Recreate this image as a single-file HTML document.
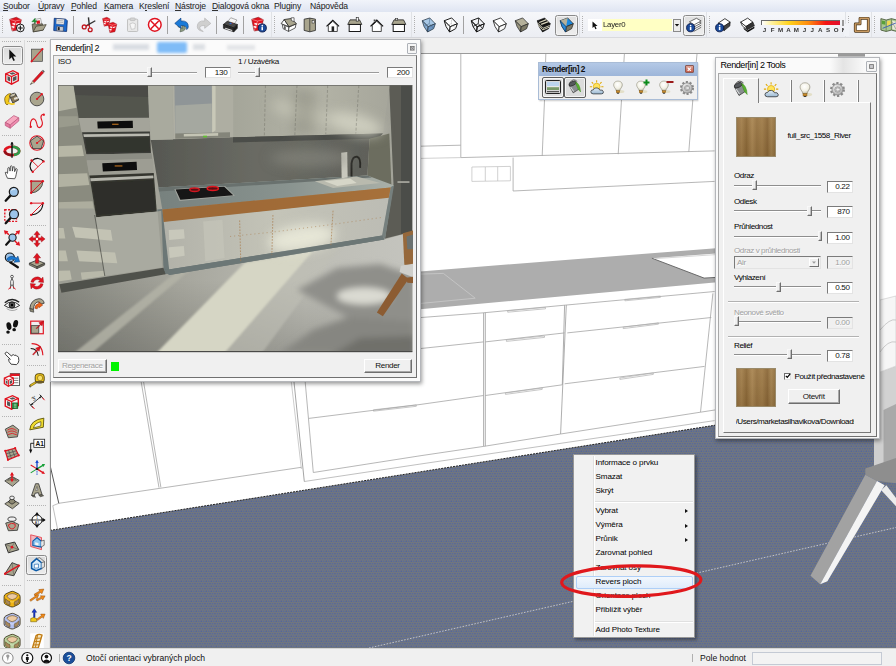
<!DOCTYPE html>
<html lang="cs">
<head>
<meta charset="utf-8">
<title>SketchUp - Render[in] 2</title>
<style>
html,body{margin:0;padding:0}
body{width:896px;height:666px;position:relative;overflow:hidden;background:#f0f0f0;font-family:"Liberation Sans","DejaVu Sans",sans-serif;font-size:8.5px;color:#111;line-height:1}
.abs{position:absolute}
#menubar{position:absolute;left:0;top:0;width:896px;height:12px;background:linear-gradient(#f1f4fa,#dfe5f2)}
#menubar span{position:absolute;top:1.5px;font-size:8.6px;letter-spacing:-0.15px;white-space:nowrap;color:#1a1a1a}
#toolbar{position:absolute;left:0;top:12px;width:896px;height:25px;background:linear-gradient(#f6f7fa,#eceef3);border-bottom:1px solid #d9dade}
#lefttb{position:absolute;left:0;top:38px;width:50px;height:610px;background:#f0f0f0}
#viewport{position:absolute;left:50px;top:53px;width:846px;height:595px;background:#fff;overflow:hidden}
#statusbar{position:absolute;left:0;top:648px;width:896px;height:18px;background:#f0f0f0;border-top:1px solid #d4d4d4;box-sizing:border-box}
svg{position:absolute;left:0;top:0;overflow:visible}
svg text{font-family:"Liberation Sans","DejaVu Sans",sans-serif}
</style>
</head>
<body>
<div id="menubar">
<span style="left:3px">Soubor<i style="left:0;width:5.4px"></i></span>
<span style="left:38px">Úpravy<i style="left:0;width:5.8px"></i></span>
<span style="left:71px">Pohled<i style="left:0;width:5.4px"></i></span>
<span style="left:104px">Kamera<i style="left:0;width:5.4px"></i></span>
<span style="left:139px">Kreslení<i style="left:5.6px;width:2.8px"></i></span>
<span style="left:175px">Nástroje<i style="left:0;width:5.8px"></i></span>
<span style="left:212px">Dialogová okna<i style="left:0;width:5.8px"></i></span>
<span style="left:274px">Pluginy</span>
<span style="left:310px">Nápověda</span>
</div>
<div id="toolbar"></div>
<style>#menubar i{position:absolute;top:8.4px;height:0.8px;background:#333}</style>
<div id="viewport">
<svg width="896" height="666" viewBox="0 0 896 666" style="left:-50px;top:-53px">
<defs>
<pattern id="dots" width="5" height="5" patternUnits="userSpaceOnUse">
<rect width="5" height="5" fill="#70767f"/>
<circle cx="1.25" cy="1.25" r="0.66" fill="#4a5fa6"/>
<circle cx="3.75" cy="1.25" r="0.66" fill="#5468a4"/>
<circle cx="0" cy="3.75" r="0.66" fill="#4a5fa6"/>
<circle cx="2.5" cy="3.75" r="0.66" fill="#5468a4"/>
<circle cx="5" cy="3.75" r="0.66" fill="#4a5fa6"/>
</pattern>
</defs>
<!-- floor -->
<polygon points="50,530.4 896,396.6 896,648 50,648" fill="url(#dots)"/>
<line x1="50" y1="530.4" x2="896" y2="396.6" stroke="#222" stroke-width="1" stroke-dasharray="2 1"/>
<!-- countertop -->
<polygon points="420,271.4 880,235.3 880,267.5 420,309.2" fill="#adadad"/>
<!-- sink -->
<polygon points="651.9,258.2 880,241.5 880,275.3 704.1,278.1" fill="#fff"/>
<path d="M651.9,258.2 L704.1,278.1 L716,277.4" fill="none" stroke="#6a6a6a" stroke-width="1"/>
<path d="M655,258.6 L716,254.6" fill="none" stroke="#c4c4c4" stroke-width="0.7"/>
<path d="M420,274.1 L443.4,273.4 L475.2,298.2 L420,303.5" fill="none" stroke="#c9c9c9" stroke-width="0.8"/>
<g fill="none" stroke="#a4a4a4" stroke-width="0.8">
<!-- upper cabinets -->
<path d="M460.8,54 L460.8,157.6"/>
<path d="M421,146.2 L460.8,145.2"/>
<path d="M421,158.4 L460.8,157.6" stroke="#c4c4c4"/>
<path d="M460.8,157.6 L714.6,150.9" />
<path d="M545.8,54 L544.5,100 L542.2,155.9"/>
<path d="M624.4,54 L621.5,100 L618.2,154.2"/>
<path d="M697,54 L692.8,100 L688.8,151.9"/>
<path d="M513.1,157.6 L513.1,191 L714.6,181.4"/>
<!-- sockets -->
<path d="M471.9,167 L510.4,166.4 L510.4,180.8 L471.9,181.4Z M485.3,167 L485.3,181 M497.7,166.8 L497.7,181" stroke="#bdbdbd" stroke-width="0.7"/>
<!-- lower cabinets -->
<path d="M420,317.6 L483.6,312.8 L565.6,305.1 L714.6,291.5"/>
<path d="M483.6,312.8 L483.6,446.4 M485.3,312.6 L485.3,446.2" stroke="#9a9a9a"/>
<path d="M566.3,305.1 L560.6,434 M564.6,305.2 L562.3,384.8" stroke="#9a9a9a"/>
<path d="M712.9,293.4 L700.5,412.2"/>
<path d="M420,348.6 L483.6,341.9"/>
<path d="M420,404.5 L483.6,395.5"/>
<path d="M485.3,341.9 L564.6,332.9"/>
<path d="M485.3,395.5 L562.3,384.8"/>
<path d="M567.3,332.9 L711.3,317.5"/>
<path d="M564.6,383.8 L704.6,366.4"/>
<!-- handles -->
<g stroke="#b0b0b0" stroke-width="0.7">
<path d="M507.7,310.8 L545.5,307.4 L545.5,308.8 L507.7,312.2Z"/>
<path d="M506.4,340 L544.5,336 L544.5,337.4 L506.4,341.4Z"/>
<path d="M505.4,393 L542.2,388 L542.2,389.4 L505.4,394.4Z"/>
<path d="M624.9,299.4 L660.4,296 L660.4,297.4 L624.9,300.8Z"/>
<path d="M623.2,327.2 L658.4,322.8 L658.4,324.2 L623.2,328.6Z"/>
<path d="M619.9,378 L653.3,373 L653.3,374.4 L619.9,379.4Z"/>
<path d="M373.5,409.8 L416.3,404.9 L416.3,406.3 L373.5,411.2Z"/>
</g>
<!-- cabinet bottom + plinth -->
<path d="M313.3,472.5 L420,455.8 L483.6,446.4 L560.6,434 L700.5,412.2 L716,409.8"/>
<path d="M304.3,481.5 L420,464.1 L714.6,420.6" stroke="#b0b0b0"/>
<!-- left below dialog -->
<path d="M291.3,382 L301.4,469" stroke="#c0c0c0"/>
<path d="M294,382 L304.3,481.5" stroke="#8e8e8e"/>
<path d="M305.2,382 L313.3,472.5"/>
<path d="M308.8,418.4 L420,404.5"/>
<path d="M141.2,382 L159,487.7 M143.6,382 L160.9,487.4"/>
<path d="M58.8,503.3 L208,481.2 L301.4,467.3"/>
<path d="M52.8,505.7 L58.8,503.3 M52.8,505.7 L57.6,529.3" stroke="#b0b0b0"/>
<path d="M50,465 L58.8,503.3" stroke="#555" stroke-width="1"/>
</g>
<path d="M369,648 L896,527.5" stroke="#c9cbd0" stroke-width="0.9" stroke-dasharray="1.6 1.4" fill="none"/>
<!-- chair at right -->
<g>
<polygon points="880,372 896,366 896,470 880,466" fill="#d2d2d2"/>
<polygon points="880,300 896,296 896,366 880,372" fill="#f6f6f6" stroke="#c8c8c8" stroke-width="0.6"/>
<path d="M880,330 Q890,318 896,320 M880,352 Q888,340 896,342" fill="none" stroke="#c0c0c0" stroke-width="0.8"/>
<polygon points="874,438 883.5,438 883.5,465 874,468" fill="#cfcfcf"/>
<polygon points="883.5,410 896,404 896,462 883.5,466" fill="#a9a9a9"/>
<polygon points="865.3,468.4 896,457.9 896,483.2 877,480.9 865.3,474.7" fill="#8e8e8e"/>
<polygon points="865.3,474.7 877,481 820.2,584.2 810.5,575.8" fill="#a2a2a2"/>
<polygon points="877,481 884.6,485.3 827.4,581.3 820.2,584.2" fill="#f4f4f4"/>
<polygon points="881.3,490.3 886.3,485.3 896,497.9 896,506.3" fill="#ececec"/>
</g>
<rect x="838" y="54" width="27" height="2.6" fill="#9c9c9c"/>
<line x1="50.5" y1="54" x2="50.5" y2="648" stroke="#8e8e8e" stroke-width="1"/>
<line x1="50" y1="53.5" x2="896" y2="53.5" stroke="#9a9a9a" stroke-width="1"/>
</svg>
</div>
<!-- Render[in] 2 dialog -->
<div class="abs" style="left:49.5px;top:38.5px;width:371.4px;height:343px;background:#fbfbfb;border:1px solid #b4b6ba;box-sizing:border-box;box-shadow:1px 2px 4px rgba(0,0,0,.4)">
<div class="abs" style="left:106px;top:2px;width:30px;height:11px;background:#7fbcf7;filter:blur(1.5px);border-radius:2px"></div>
<div class="abs" style="left:62px;top:4px;width:36px;height:6px;background:#d9dde2;filter:blur(1.5px)"></div>
<div class="abs" style="left:142px;top:4px;width:12px;height:6px;background:#dcdfe3;filter:blur(1.5px)"></div>
<div class="abs" style="left:176px;top:5px;width:28px;height:5px;background:#e2e4e7;filter:blur(1.5px)"></div>
<span class="abs" style="left:5px;top:4px;font-size:9px;letter-spacing:-0.45px;white-space:nowrap;color:#000">Render[in] 2</span>
<div class="abs" style="left:356.3px;top:3.5px;width:10.6px;height:10.6px;border:1px solid #aeb2b8;box-sizing:border-box;background:#f6f6f6;border-radius:1px"><svg width="8.6" height="8.6" viewBox="0 0 9 9"><rect x="2.6" y="2.6" width="3.8" height="3.8" fill="#c8c8cc" stroke="#777" stroke-width="0.9"/><path d="M2.6,2.6 L6.4,6.4 M6.4,2.6 L2.6,6.4" stroke="#777" stroke-width="0.7"/></svg></div>
<div class="abs" style="left:2.3px;top:15px;width:364.6px;height:323.6px;background:#f0f0f0;border:1px solid #a8a8a8;border-right-color:#707070;border-bottom-color:#707070;box-sizing:border-box"></div>
</div>
<div class="abs" id="rdlg" style="left:0;top:0;width:0;height:0">
<span class="abs" style="left:58px;top:58px;font-size:8.1px;letter-spacing:-0.38px">ISO</span>
<span class="abs" style="left:238px;top:58px;font-size:8.1px;letter-spacing:-0.38px;white-space:nowrap">1 / Uzávěrka</span>
<!-- sliders -->
<div class="abs" style="left:58px;top:71.5px;width:139px;height:1px;background:#9b9b9b;border-bottom:1px solid #fff"></div>
<div class="abs" style="left:148px;top:67px;width:4.4px;height:10px;margin-left:-0.8px;background:#f0f0f0;border:1px solid #f8f8f8;border-right-color:#6e6e6e;border-bottom-color:#6e6e6e;box-sizing:border-box;box-shadow:inset -0.6px -0.6px 0 #a0a0a0"></div>
<div class="abs" style="left:238px;top:71.5px;width:141px;height:1px;background:#9b9b9b;border-bottom:1px solid #fff"></div>
<div class="abs" style="left:256px;top:67px;width:4.4px;height:10px;margin-left:-0.8px;background:#f0f0f0;border:1px solid #f8f8f8;border-right-color:#6e6e6e;border-bottom-color:#6e6e6e;box-sizing:border-box;box-shadow:inset -0.6px -0.6px 0 #a0a0a0"></div>
<div class="abs vbox" style="left:204.5px;top:67px;width:26px;height:11px"><span>130</span></div>
<div class="abs vbox" style="left:387px;top:67px;width:25.5px;height:11px"><span>200</span></div>
<!-- buttons -->
<div class="abs btn" style="left:58px;top:359px;width:48.5px;height:13.5px;color:#a0a0a0;text-shadow:0.5px 0.5px 0 #fff"><span>Regenerace</span></div>
<div class="abs" style="left:110.5px;top:362px;width:8.5px;height:8.7px;background:#00f400"></div>
<div class="abs btn" style="left:363.5px;top:359px;width:48px;height:13.5px"><span>Render</span></div>
</div>
<style>
.vbox{background:#fff;border:1px solid #7a7a7a;border-right-color:#e3e3e3;border-bottom-color:#e3e3e3;box-sizing:border-box;font-size:7.6px;text-align:right}
.vbox span{position:absolute;right:2.2px;top:1.4px;letter-spacing:-0.35px;font-size:8.1px}
.btn{background:#f0f0f0;border:1px solid #fff;border-right-color:#6e6e6e;border-bottom-color:#6e6e6e;box-sizing:border-box;font-size:7.6px;text-align:center;box-shadow:inset -1px -1px 0 #a8a8a8}
.btn span{position:absolute;left:0;right:0;top:2.3px;letter-spacing:-0.35px;font-size:8.1px}
</style>
<!-- rendered kitchen image -->
<svg class="abs" width="896" height="666" viewBox="0 0 896 666" style="left:0;top:0;pointer-events:none">
<defs>
<clipPath id="imgclip"><rect x="58" y="85.3" width="354.3" height="266.5"/></clipPath>
<filter id="b1" x="-5%" y="-5%" width="110%" height="110%"><feGaussianBlur stdDeviation="0.55"/></filter>
<filter id="b2" x="-20%" y="-20%" width="140%" height="140%"><feGaussianBlur stdDeviation="1.3"/></filter>
<filter id="b3" x="-20%" y="-20%" width="140%" height="140%"><feGaussianBlur stdDeviation="3"/></filter>
<filter id="b6" x="-30%" y="-30%" width="160%" height="160%"><feGaussianBlur stdDeviation="6"/></filter>
<linearGradient id="flr" gradientUnits="userSpaceOnUse" x1="58" y1="0" x2="412" y2="0"><stop offset="0" stop-color="#878880"/><stop offset="0.35" stop-color="#a6a69d"/><stop offset="0.7" stop-color="#bdbdb5"/><stop offset="1" stop-color="#c4c4be"/></linearGradient>
<linearGradient id="flrv" gradientUnits="userSpaceOnUse" x1="0" y1="280" x2="0" y2="352"><stop offset="0" stop-color="#000" stop-opacity="0"/><stop offset="1" stop-color="#000" stop-opacity="0.17"/></linearGradient>
<linearGradient id="bsp" gradientUnits="userSpaceOnUse" x1="150" y1="0" x2="390" y2="0"><stop offset="0" stop-color="#565751"/><stop offset="0.45" stop-color="#6a6b64"/><stop offset="1" stop-color="#5e5f58"/></linearGradient>
<linearGradient id="upc" gradientUnits="userSpaceOnUse" x1="230" y1="0" x2="390" y2="0"><stop offset="0" stop-color="#a4a599"/><stop offset="0.55" stop-color="#b3b3a6"/><stop offset="1" stop-color="#a6a69b"/></linearGradient>
<linearGradient id="ctop" gradientUnits="userSpaceOnUse" x1="158" y1="0" x2="394" y2="0"><stop offset="0" stop-color="#77817e"/><stop offset="0.55" stop-color="#89938f"/><stop offset="1" stop-color="#aab0a8"/></linearGradient>
<linearGradient id="woodk" gradientUnits="userSpaceOnUse" x1="162" y1="0" x2="390" y2="0"><stop offset="0" stop-color="#95673a"/><stop offset="0.6" stop-color="#a06e3a"/><stop offset="1" stop-color="#ad7a42"/></linearGradient>
<linearGradient id="cabf" gradientUnits="userSpaceOnUse" x1="165" y1="0" x2="390" y2="0"><stop offset="0" stop-color="#b2b2a9"/><stop offset="0.5" stop-color="#c4c4b8"/><stop offset="1" stop-color="#bcbcb4"/></linearGradient>
</defs>
<g clip-path="url(#imgclip)">
<rect x="58" y="85" width="355" height="267" fill="#a3a399"/>
<g filter="url(#b1)">
<!-- floor (global) -->
<polygon points="58,284 164,268 170,275 384,239.5 413,231.5 413,353 58,353" fill="url(#flr)"/>
<polygon points="58,284 413,231.5 413,353 58,353" fill="url(#flrv)"/>
</g>
<!-- floor light & shadows (blurred) -->
<g filter="url(#b2)">
<polygon points="245,262.4 313,251.1 224.7,353 156.4,353" fill="#d6d6c5"/>
<polygon points="176.5,272 190,270 92,353 74,353" fill="#b4b4a8" opacity="0.8"/>
<polygon points="313,251.1 340,247 262,353 224.7,353" fill="#c0c0b6" opacity="0.6"/>
</g>
<g filter="url(#b3)">
<polygon points="297,290 337,268 380,264 415,276 415,326 349,318" fill="#8f8f8a"/>
<polygon points="279,354 313,330 349,317 415,322 415,354" fill="#868681"/>
<polygon points="330,356 360,338 415,336 415,356" fill="#6f6f6a"/>
<ellipse cx="364" cy="296" rx="27" ry="8.5" fill="#dadad2"/>
</g>
<g filter="url(#b1)">
<!-- right wall -->
<polygon points="389,82 413,82 413,231.5 385,238.4 393.5,184" fill="#5b5c55"/>
<polygon points="401,82 413,82 413,231 401,234" fill="#4c4d48"/>
<!-- upper cabinets right part -->
<polygon points="233,82 390,82 383,133.5 233,137.3" fill="url(#upc)"/>
<!-- backsplash -->
<polygon points="150.8,140 233,137.3 383,133.5 369.6,139 367.4,175.6 158.5,187.6" fill="url(#bsp)"/>
<polygon points="233,137.3 383,133.5 378,138.5 233,142.5" fill="#4c4d48"/>
<polygon points="369.6,138.8 389.3,133.5 391.4,185.5 367.4,176.5" fill="#6c6d5f"/>
<!-- countertop -->
<polygon points="158.5,187.6 367.4,175.6 394.2,185.5 390.6,187.8 162.3,209.6" fill="url(#ctop)"/>
<polygon points="158.5,187.6 367.4,175.6 372,177.5 159,191.5" fill="#69716e"/>
<!-- wood -->
<polygon points="162.3,209.5 390.6,187.6 388.8,197.8 163.6,222" fill="url(#woodk)"/>
<!-- cabinet fronts -->
<polygon points="163.6,222 388.8,197.8 382.6,235.7 164.3,270.6" fill="url(#cabf)"/>
<!-- frames -->
<polygon points="157.2,209.5 162.3,209.1 169.6,273.4 164,274.2" fill="#6c7776"/>
<polygon points="164,270.2 382.3,235.5 384.3,239.5 169.2,275" fill="#6c7776"/>
<polygon points="390.8,187 394,185.3 385,239.3 382,235.8" fill="#76807e"/>
<!-- ===== top-left quadrant details ===== -->
<g transform="translate(55,82) scale(0.21469)">
<!-- left wall -->
<polygon points="0,0 90,0 200,680 0,680" fill="#8a8b7f"/>
<polygon points="0,0 85,0 100,120 0,140" fill="#b4b4a4"/>
<polygon points="0,160 105,160 112,200 0,215" fill="#9a9b8d"/>
<polygon points="0,300 125,295 135,345 0,350" fill="#b7b7a6"/>
<polygon points="0,430 150,425 160,480 0,490" fill="#b2b2a2"/>
<polygon points="0,560 175,555 185,610 0,620" fill="#adad9e"/>
<!-- dark above oven -->
<polygon points="85,0 432,0 438,168 110,168" fill="#53544e"/>
<polygon points="85,0 432,0 434,70 95,60" fill="#4b4c46"/>
<!-- oven 1 panel -->
<polygon points="110,168 440,166 442,230 124,234" fill="#a4a49a"/>
<polygon points="197,184 362,181 363,214 199,217" fill="#0d0d0c"/>
<rect x="266" y="194" width="30" height="6" fill="#a8661c"/>
<!-- oven 1 door -->
<polygon points="126,234 442,230 447,332 146,338" fill="#3b3c37"/>
<polygon points="132,243 440,240 440,252 134,256" fill="#b9b9b0"/>
<polygon points="140,262 438,258 444,325 150,330" fill="#33342f"/>
<!-- gap -->
<polygon points="142,338 450,332 453,360 147,366" fill="#8c8d84"/>
<!-- oven 2 panel -->
<polygon points="147,366 455,358 460,424 160,436" fill="#9d9d93"/>
<polygon points="220,378 380,372 382,410 223,417" fill="#0d0d0c"/>
<rect x="278" y="388" width="36" height="6" fill="#a8661c"/>
<!-- oven 2 door -->
<polygon points="160,436 460,424 474,604 192,630" fill="#34352f"/>
<polygon points="164,448 458,436 459,448 166,462" fill="#b4b4ab"/>
<polygon points="172,470 456,456 468,596 196,620" fill="#2d2e29"/>
<!-- upper narrow cab -->
<polygon points="432,0 548,0 550,268 446,270" fill="#a9aa9e"/>
<!-- glass cab -->
<polygon points="548,0 830,0 830,256 552,266" fill="#aeaea2"/>
<polygon points="556,8 730,8 732,236 560,240" fill="#8f9597"/>
<polygon points="560,110 730,100 732,236 560,240" fill="#a5a8a0"/>
<polygon points="732,8 748,20 748,225 732,236" fill="#c8c8b8"/>
<polygon points="560,240 815,234 815,258 560,264" fill="#84857a"/>
<polygon points="600,242 760,238 760,250 600,254" fill="#c4c4b4"/>
<rect x="690" y="250" width="18" height="8" fill="#5fc030"/>
<!-- cooktop -->
<polygon points="556,498 792,484 838,530 580,554" fill="#a0a49e"/>
<polygon points="562,501 788,488 830,528 584,549" fill="#141414"/>
<ellipse cx="650" cy="502" rx="22" ry="8" fill="#5a1014" stroke="#d01820" stroke-width="7"/>
<ellipse cx="735" cy="496" rx="26" ry="9" fill="#5a1014" stroke="#e01820" stroke-width="7"/>
</g>
<!-- ===== sink etc ===== -->
<g transform="translate(230,82) scale(0.21469)">
<polygon points="395,462 590,440 700,470 480,494" fill="#b9baae"/>
<polygon points="440,462 560,450 590,470 500,484" fill="#d6d6c8"/>
<polygon points="518,330 546,326 548,445 520,448" fill="#c9c9be"/>
<path d="M566,440 L566,380 Q570,345 592,348 Q610,352 606,400" fill="none" stroke="#2c2c28" stroke-width="9"/>
<rect x="780" y="462" width="56" height="8" fill="#a8a8a0"/>
</g>
<!-- ===== tall cabinet lower ===== -->
<g transform="translate(55,215) scale(0.21469)">
<polygon points="0,-30 180,-30 192,10 476,-16 495,-20 505,246 20,322 0,330" fill="#9c9d93"/>
<polygon points="186,12 478,-15 500,244 232,284" fill="#a9aaa0"/>
<polygon points="80,55 260,70 268,120 95,105" fill="#c3c3b4"/>
<polygon points="100,165 280,175 290,225 112,215" fill="#c0c0b1"/>
<polygon points="15,60 40,60 48,110 15,110" fill="#bcbcac"/>
<polygon points="15,165 50,165 60,215 15,215" fill="#bcbcac"/>
<polygon points="15,260 70,258 78,300 15,310" fill="#bcbcac"/>
<polygon points="120,268 230,260 232,284 125,300" fill="#b8b8a9"/>
<path d="M185,0 L232,284" stroke="#3a3b36" stroke-width="3" fill="none"/>
<!-- plinth -->
<polygon points="20,322 505,246 515,276 30,362" fill="#50514b"/>
<polygon points="690,30 780,22 790,200 700,215" fill="#c6c6ba" opacity="0.6"/>
<polygon points="530,70 600,66 604,110 532,116" fill="#c8c8bb"/>
<polygon points="530,150 600,144 604,190 534,200" fill="#c8c8bb"/>
</g>
</g>
<g filter="url(#b6)">
<ellipse cx="355" cy="124" rx="28" ry="10" fill="#d2d2c2" opacity="0.9" transform="rotate(14 355 124)"/>
<ellipse cx="300" cy="112" rx="30" ry="8" fill="#c6c6b6" opacity="0.8" transform="rotate(16 300 112)"/>
<rect x="292" y="90" width="24" height="44" fill="#84857a" opacity="0.45"/>
<ellipse cx="302" cy="238" rx="34" ry="13" fill="#e8e8d8" opacity="0.95" transform="rotate(-9 302 238)"/>
<ellipse cx="310" cy="158" rx="40" ry="9" fill="#8a8b82" opacity="0.6"/>
</g>
<g filter="url(#b1)">
<g transform="translate(230,82) scale(0.21469)" fill="none" stroke="#5e5f55" stroke-width="3" stroke-dasharray="14 8" opacity="0.55"><path d="M165,15 L160,252 M312,15 L302,247 M455,15 L446,243 M600,15 L586,240"/></g>
<!-- redraw frames over glow -->
<polygon points="164,270.2 382.3,235.5 384.3,239.5 169.2,275" fill="#6c7776"/>
<polygon points="162.3,209.5 390.6,187.6 388.8,197.8 163.6,222" fill="#a26a34" opacity="0.55"/>
<g transform="translate(230,215) scale(0.21469)">
<!-- chair -->
<polygon points="805,85 860,70 860,235 812,232" fill="#96683a"/>
<polygon points="822,100 860,88 860,160 826,160" fill="#6a716f"/>
<polygon points="796,236 860,226 860,292 790,266" fill="#cfcfcb"/>
<polygon points="800,272 832,298 712,472 684,454" fill="#8c5c32"/>
<polygon points="820,292 860,286 860,318 826,316" fill="#8c5c32"/>
<path d="M200,0 L195,185 M480,-20 L470,140 M45,25 L50,215" stroke="#a87848" stroke-width="3" stroke-dasharray="8 6" fill="none"/>
<path d="M0,100 L195,80 L470,45 L716,10" stroke="#a87848" stroke-width="2.5" stroke-dasharray="5 14" fill="none"/>
</g>
</g>
</g>
<rect x="58" y="351" width="354.3" height="1.2" fill="#4a4a48"/>
<rect x="58" y="85.2" width="354.3" height="0.8" fill="#5a5a56" opacity="0.8"/>
<rect x="58" y="85.2" width="0.8" height="266" fill="#6a6a66" opacity="0.7"/>
</svg>
<!-- icon symbols -->
<svg width="0" height="0" style="position:absolute">
<defs>
<radialGradient id="bulbg" cx="0.45" cy="0.35" r="0.6"><stop offset="0" stop-color="#ffffff"/><stop offset="0.7" stop-color="#f2f0e4"/><stop offset="1" stop-color="#c9c6b4"/></radialGradient>
<radialGradient id="gearg" cx="0.4" cy="0.35" r="0.7"><stop offset="0" stop-color="#f4f4f4"/><stop offset="1" stop-color="#a9a9a9"/></radialGradient>
<linearGradient id="cloudg" x1="0" y1="0" x2="0" y2="1"><stop offset="0" stop-color="#e4eef6"/><stop offset="1" stop-color="#9ab8d2"/></linearGradient>
<linearGradient id="woodg" x1="0" y1="0" x2="1" y2="0"><stop offset="0" stop-color="#8a5f2c"/><stop offset="0.12" stop-color="#9c7038"/><stop offset="0.25" stop-color="#86592a"/><stop offset="0.4" stop-color="#a27840"/><stop offset="0.52" stop-color="#8e6430"/><stop offset="0.66" stop-color="#9a6e36"/><stop offset="0.8" stop-color="#84592a"/><stop offset="0.9" stop-color="#9f743c"/><stop offset="1" stop-color="#8b602e"/></linearGradient>
<symbol id="i-bucket" viewBox="0 0 20 20">
<path d="M3.5,8 L11,4.5 L15,12 L8,16.5 Z" fill="#8a8d90" stroke="#3a3a3a" stroke-width="0.8"/>
<ellipse cx="7.2" cy="6.2" rx="4.2" ry="2.2" transform="rotate(-25 7.2 6.2)" fill="#55585c" stroke="#2c2c2c" stroke-width="0.8"/>
<path d="M4,5.5 Q8,-0.5 12.5,4" fill="none" stroke="#444" stroke-width="0.9"/>
<path d="M10.5,4.5 Q15.5,6 16.2,15.5 Q13,13 12,9 Z" fill="#58b030" stroke="#3c8a1c" stroke-width="0.5"/>
<path d="M5,10 L8.5,15" stroke="#d8dadc" stroke-width="1.2"/>
</symbol>
<symbol id="i-sun" viewBox="0 0 20 20">
<g stroke="#e0a800" stroke-width="1.2"><path d="M9,1.5 L9,4 M3.2,3.6 L5,5.4 M14.8,3.6 L13,5.4 M1,9 L3.5,9 M17,9 L14.5,9"/></g>
<circle cx="9" cy="9" r="4" fill="#ffe45c" stroke="#e0a800" stroke-width="0.8"/>
<path d="M5,17.5 Q2,17.5 2.2,14.8 Q2.5,12.5 5,12.8 Q6,9.8 9.5,10.5 Q12,10.8 12.6,13 Q16.5,12.2 17,15.2 Q17.2,17.5 14.5,17.5 Z" fill="url(#cloudg)" stroke="#303438" stroke-width="0.9"/>
</symbol>
<symbol id="i-bulb" viewBox="0 0 20 20">
<ellipse cx="13" cy="15" rx="5" ry="2" fill="#d9d2a8" opacity="0.55"/>
<path d="M10,2 C5.5,2 4,5.5 4.8,8.2 C5.5,10.5 7.3,11.5 7.6,14 L12.4,14 C12.7,11.5 14.5,10.5 15.2,8.2 C16,5.5 14.5,2 10,2 Z" fill="url(#bulbg)" stroke="#8a8878" stroke-width="0.7"/>
<rect x="7.8" y="14" width="4.4" height="2.6" fill="#c88a28" stroke="#7a5010" stroke-width="0.5"/>
<rect x="8.6" y="16.6" width="2.8" height="1.2" fill="#3a3a3a"/>
</symbol>
<symbol id="i-gear" viewBox="0 0 20 20">
<circle cx="10" cy="10" r="7.4" fill="none" stroke="#8a8a8a" stroke-width="2.8" stroke-dasharray="2.6 2.05"/>
<circle cx="10" cy="10" r="6.5" fill="url(#gearg)" stroke="#7c7c7c" stroke-width="0.8"/>
<circle cx="10" cy="10" r="3.1" fill="#ededed" stroke="#808080" stroke-width="0.9"/>
<path d="M11.4,8.8 A1.8,1.8 0 1 0 11.4,11.2" fill="none" stroke="#8a8a8a" stroke-width="0.8"/>
</symbol>
</defs>
</svg>
<!-- Render[in] 2 Tools panel -->
<div class="abs" style="left:715px;top:57.4px;width:165.3px;height:382px;background:linear-gradient(90deg,#fafafa 0,#fafafa 70%,#e4e4e4 78%,#fafafa 92%);border:1px solid #b4b6ba;box-sizing:border-box;box-shadow:1px 2px 4px rgba(0,0,0,.4)">
<div class="abs" style="left:0;top:16px;width:163.3px;height:364px;background:#fafafa"></div>
<span class="abs" style="left:4.5px;top:3px;font-size:9px;letter-spacing:-0.42px;white-space:nowrap;color:#000">Render[in] 2 Tools</span>
<div class="abs" style="left:149.6px;top:2.6px;width:11px;height:11px;border:1px solid #aeb2b8;box-sizing:border-box;background:#f6f6f6;border-radius:1px"><svg width="9" height="9" viewBox="0 0 9 9"><rect x="2.6" y="2.6" width="3.8" height="3.8" fill="#c8c8cc" stroke="#777" stroke-width="0.9"/></svg></div>
<div class="abs" style="left:2.4px;top:14.6px;width:158.7px;height:363.6px;background:#f0f0f0;border:1px solid #a8a8a8;border-right-color:#707070;border-bottom-color:#707070;box-sizing:border-box"></div>
</div>
<div class="abs" style="left:0;top:0;width:0;height:0" id="tools">
<!-- tab pane border -->
<div class="abs" style="left:723px;top:102px;width:147.9px;height:330.8px;border:1px solid #fff;border-right:1.2px solid #787878;border-bottom:1.2px solid #787878;box-sizing:border-box"></div>
<!-- selected tab -->
<div class="abs" style="left:723px;top:78px;width:36px;height:25px;background:#f0f0f0;border-left:1px solid #fff;border-top:1px solid #fff;border-right:1px solid #7e7e7e;box-sizing:border-box"></div>
<div class="abs" style="left:790.3px;top:80px;width:1px;height:22px;background:#7e7e7e;border-left:1px solid #fff"></div>
<div class="abs" style="left:823.3px;top:80px;width:1px;height:22px;background:#7e7e7e;border-left:1px solid #fff"></div>
<div class="abs" style="left:856.5px;top:80px;width:1px;height:22px;background:#7e7e7e;border-left:1px solid #fff"></div>
<svg class="abs" style="left:731px;top:79px" width="20" height="20"><use href="#i-bucket"/></svg>
<svg class="abs" style="left:763px;top:80.5px" width="18" height="18"><use href="#i-sun"/></svg>
<svg class="abs" style="left:795.5px;top:80.5px" width="18" height="18"><use href="#i-bulb"/></svg>
<svg class="abs" style="left:829px;top:81px" width="17" height="17"><use href="#i-gear"/></svg>
<!-- swatch 1 -->
<div class="abs swatch" style="left:735.5px;top:116.5px;width:40px;height:40px"></div>
<span class="abs t" style="left:787.5px;top:132px">full_src_1558_River</span>
<!-- Odraz -->
<span class="abs t" style="left:734px;top:172px">Odraz</span>
<div class="abs trk" style="left:734px;top:184.5px;width:87px"></div><div class="abs thm" style="left:753.5px;top:180px"></div>
<div class="abs vbox" style="left:826.8px;top:180.5px;width:26px;height:12px"><span>0.22</span></div>
<!-- Odlesk -->
<span class="abs t" style="left:734px;top:197.5px">Odlesk</span>
<div class="abs trk" style="left:734px;top:210px;width:87px"></div><div class="abs thm" style="left:808.5px;top:205.5px"></div>
<div class="abs vbox" style="left:826.8px;top:206px;width:26px;height:12px"><span>870</span></div>
<!-- Pruhlednost -->
<span class="abs t" style="left:734px;top:223px">Průhlednost</span>
<div class="abs trk" style="left:734px;top:235.5px;width:87px"></div><div class="abs thm" style="left:819px;top:231px"></div>
<div class="abs vbox" style="left:826.8px;top:231.5px;width:26px;height:12px"><span>1.00</span></div>
<!-- Odraz v pruhlednosti -->
<span class="abs t dis" style="left:734px;top:247.2px">Odraz v průhlednosti</span>
<div class="abs" style="left:734px;top:256.3px;width:86.5px;height:12.6px;background:#f0f0f0;border:1.3px solid #7a7a7a;border-right-color:#e3e3e3;border-bottom-color:#e3e3e3;box-sizing:border-box"><span class="abs dis" style="left:2px;top:1.6px;font-size:8.1px;letter-spacing:-0.4px">Air</span><div class="abs" style="right:0.5px;top:0.5px;width:10px;height:9px;background:#f0f0f0;border:1px solid #fff;border-right-color:#707070;border-bottom-color:#707070;box-sizing:border-box"><svg width="8" height="7" viewBox="0 0 8 7"><path d="M2,2.5 L6,2.5 L4,4.8 Z" fill="#9a9a9a"/></svg></div></div>
<div class="abs vbox dis" style="left:826.8px;top:256.3px;width:26px;height:12.6px;background:#f0f0f0"><span>1.00</span></div>
<!-- Vyhlazeni -->
<span class="abs t" style="left:734px;top:274px">Vyhlazení</span>
<div class="abs trk" style="left:734px;top:286px;width:87px"></div><div class="abs thm" style="left:777.5px;top:281.5px"></div>
<div class="abs vbox" style="left:826.8px;top:282px;width:26px;height:12px"><span>0.50</span></div>
<div class="abs sep" style="left:728px;top:301px;width:131px"></div>
<!-- Neonove svetlo -->
<span class="abs t dis" style="left:734px;top:308.5px">Neonové světlo</span>
<div class="abs trk" style="left:734px;top:320.5px;width:87px"></div><div class="abs thm" style="left:735.5px;top:316px"></div>
<div class="abs vbox dis" style="left:826.8px;top:317px;width:26px;height:12px;background:#f0f0f0"><span>0.00</span></div>
<div class="abs sep" style="left:728px;top:335.5px;width:131px"></div>
<!-- Relief -->
<span class="abs t" style="left:734px;top:341.5px">Reliéf</span>
<div class="abs trk" style="left:734px;top:353.5px;width:87px"></div><div class="abs thm" style="left:788.5px;top:349px"></div>
<div class="abs vbox" style="left:826.8px;top:349.5px;width:26px;height:12px"><span>0.78</span></div>
<!-- swatch 2 -->
<div class="abs swatch" style="left:735.5px;top:367.5px;width:40px;height:39.5px"></div>
<div class="abs" style="left:783.5px;top:372.5px;width:7.5px;height:7.5px;background:#fff;border:1px solid #6e6e6e;border-right-color:#e0e0e0;border-bottom-color:#e0e0e0;box-sizing:border-box"><svg width="6" height="6" viewBox="0 0 6 6" style="left:0;top:-0.3px"><path d="M0.8,2.8 L2.3,4.4 L5.2,0.9" fill="none" stroke="#000" stroke-width="1.2"/></svg></div>
<span class="abs t" style="left:794.5px;top:372.5px">Použít přednastavené</span>
<div class="abs btn" style="left:787.6px;top:389px;width:52.3px;height:14.8px"><span style="top:3.2px">Otevřít</span></div>
<div class="abs" style="left:735.5px;top:417.5px;width:118.5px;height:9px;overflow:hidden;white-space:nowrap"><span class="t" style="position:absolute;left:0;top:0">/Users/marketasilhavikova/Downloads/</span></div>
</div>
<style>
#tools .t,.t{font-size:8.1px;letter-spacing:-0.44px;white-space:nowrap;color:#000}
.dis,#tools .dis{color:#a0a0a0 !important;text-shadow:0.5px 0.5px 0 #fff}
.trk{height:1.2px;background:#8e8e8e;border-bottom:1px solid #fff}
.thm{width:4.4px;height:10px;margin-left:-1.2px;background:#f0f0f0;border:1px solid #f8f8f8;border-right-color:#6e6e6e;border-bottom-color:#6e6e6e;box-sizing:border-box;box-shadow:inset -0.6px -0.6px 0 #a0a0a0}
.sep{height:1px;background:#b2b2b2;border-bottom:1px solid #fff}
.swatch{background:linear-gradient(180deg,rgba(255,255,255,.06),rgba(0,0,0,.08)),linear-gradient(90deg,#947040 0,#a27e4a 12%,#8c6836 25%,#aa8652 40%,#967240 52%,#a07c48 66%,#8a6636 80%,#a4824e 90%,#92703e 100%);border:0.6px solid #9a8a6a;box-sizing:border-box}
</style>
<!-- floating Render[in] 2 toolbar -->
<div class="abs" style="left:538px;top:61.5px;width:160px;height:38.5px;background:#f0f0f0;border:1px solid #a9bcd6;box-sizing:border-box;box-shadow:0.5px 1px 1.5px rgba(0,0,0,.25)">
<div class="abs" style="left:0;top:0;width:158px;height:13px;background:linear-gradient(#b4c9e6,#9db5d9)"></div>
<span class="abs" style="left:3px;top:2.5px;font-size:8.3px;font-weight:bold;letter-spacing:-0.45px;white-space:nowrap;color:#111">Render[in] 2</span>
<div class="abs" style="left:146px;top:2px;width:8.5px;height:8.5px;background:linear-gradient(#e0a498,#c45a48);border:1px solid #8a5a54;box-sizing:border-box;border-radius:1px"><svg width="6.5" height="6.5" viewBox="0 0 7 7"><path d="M1.8,1.8 L5.2,5.2 M5.2,1.8 L1.8,5.2" stroke="#fff" stroke-width="1.3"/></svg></div>
<div class="abs" style="left:2.5px;top:14.5px;width:22px;height:20.5px;border:1px solid #5e5e5e;border-radius:2px;background:#e2e2e2;box-sizing:border-box;box-shadow:inset 0 0 0 1px #f8f8f8"></div>
<div class="abs" style="left:25px;top:14.5px;width:22px;height:20.5px;border:1px solid #5e5e5e;border-radius:2px;background:#dcdcdc;box-sizing:border-box;box-shadow:inset 0 0 0 1px #f4f4f4"></div>
<svg class="abs" style="left:5.5px;top:17.5px" width="16" height="14" viewBox="0 0 16 14"><rect x="0.5" y="0.5" width="15" height="13" rx="1" fill="#d8d8d8" stroke="#222" stroke-width="1"/><rect x="2" y="2" width="12" height="8" fill="#bcd4ee"/><rect x="2" y="6" width="12" height="4" fill="#7a9a6a"/><rect x="2" y="6" width="12" height="1.2" fill="#e8e8e8"/><rect x="2" y="11" width="12" height="1.2" fill="#555"/></svg>
<svg class="abs" style="left:27px;top:15.5px" width="18" height="18"><use href="#i-bucket"/></svg>
<svg class="abs" style="left:50px;top:16.5px" width="17" height="17"><use href="#i-sun"/></svg>
<svg class="abs" style="left:71px;top:16.5px" width="16" height="17"><use href="#i-bulb"/></svg>
<svg class="abs" style="left:94px;top:16.5px" width="16" height="17"><use href="#i-bulb"/></svg>
<svg class="abs" style="left:104px;top:16px" width="7" height="7" viewBox="0 0 7 7"><path d="M3.5,0.5 L3.5,6.5 M0.5,3.5 L6.5,3.5" stroke="#0a8a1a" stroke-width="2"/></svg>
<svg class="abs" style="left:116.5px;top:16.5px" width="16" height="17"><use href="#i-bulb"/></svg>
<svg class="abs" style="left:127px;top:17.5px" width="8" height="4" viewBox="0 0 8 4"><path d="M0.5,2 L7.5,2" stroke="#9a1a1a" stroke-width="2"/></svg>
<svg class="abs" style="left:139.5px;top:17px" width="16" height="16"><use href="#i-gear"/></svg>
</div>
<!-- context menu -->
<div class="abs" id="ctx" style="left:573px;top:453.5px;width:122px;height:184px;background:#f1f1f1;border:1px solid #979797;box-sizing:border-box;box-shadow:2px 2px 3px rgba(0,0,0,.35)">
<div class="abs" style="left:18.5px;top:1px;width:1px;height:180px;background:#e0e0e0;border-right:1px solid #fff"></div>
<div class="abs" style="left:1.5px;top:121.5px;width:117.5px;height:12.5px;border:1px solid #aecff7;border-radius:2px;background:linear-gradient(#f2f7fd,#dfecfb);box-sizing:border-box"></div>
<span style="top:4.5px">Informace o prvku</span>
<span style="top:18.5px">Smazat</span>
<span style="top:32.5px">Skrýt</span>
<div class="abs" style="left:21px;top:46.5px;width:98px;height:1px;background:#e0e0e0;border-bottom:1px solid #fff"></div>
<span style="top:52px">Vybrat</span><i style="top:54.5px"></i>
<span style="top:66.5px">Výměra</span><i style="top:69px"></i>
<span style="top:80.5px">Průnik</span><i style="top:83px"></i>
<span style="top:94.5px">Zarovnat pohled</span>
<span style="top:109px">Zarovnat osy</span>
<span style="top:123px">Revers ploch</span>
<span style="top:137px">Orientace ploch</span>
<span style="top:151.5px">Přiblížit výběr</span>
<div class="abs" style="left:21px;top:166px;width:98px;height:1px;background:#e0e0e0;border-bottom:1px solid #fff"></div>
<span style="top:171px">Add Photo Texture</span>
</div>
<svg class="abs" width="896" height="666" viewBox="0 0 896 666" style="left:0;top:0;pointer-events:none"><ellipse cx="631.3" cy="581.1" rx="69.6" ry="15.2" fill="none" stroke="#e0181c" stroke-width="3.2" transform="rotate(-1.2 631.3 581.1)"/></svg>
<style>
#ctx span{position:absolute;left:21.5px;font-size:8.1px;letter-spacing:-0.12px;white-space:nowrap;color:#000}
#ctx i{position:absolute;left:111px;width:0;height:0;border-left:3px solid #111;border-top:2.5px solid transparent;border-bottom:2.5px solid transparent}
</style>
<!-- status bar -->
<div id="statusbar">
<svg class="abs" style="left:0;top:0" width="90" height="18" viewBox="0 0 90 18">
<circle cx="7.8" cy="9" r="5.3" fill="#fdfdfd" stroke="#8a8a8a" stroke-width="1"/><path d="M7.8,5.4 a1.7,1.7 0 0 1 0.9,3.1 L7.8,12.2 L6.9,8.5 A1.7,1.7 0 0 1 7.8,5.4Z" fill="#9a9a9a"/>
<circle cx="27.3" cy="9" r="5.5" fill="#fff" stroke="#111" stroke-width="1.2"/><circle cx="27.3" cy="6.3" r="1.1" fill="#111"/><path d="M25.9,8 h2.8 v3 h-0.7 v2 h-1.4 v-2 h-0.7z" fill="#111"/>
<circle cx="46.5" cy="9" r="5.6" fill="#111"/><circle cx="46.5" cy="9" r="4.4" fill="#fff"/><circle cx="46.5" cy="7.6" r="1.9" fill="#111"/><path d="M42.9,12.4 Q46.5,8.6 50.1,12.4 Q46.5,15 42.9,12.4Z" fill="#111"/>
<rect x="59" y="5" width="1" height="8" fill="#b0b0b0"/>
<circle cx="69" cy="9" r="5.8" fill="#1b4f9a" stroke="#0f3470" stroke-width="0.8"/>
<text x="69" y="12" font-size="8.5" font-weight="bold" fill="#fff" text-anchor="middle">?</text>
</svg>
<span class="abs" style="left:86px;top:5px;font-size:8.6px;letter-spacing:-0.03px;white-space:nowrap">Otočí orientaci vybraných ploch</span>
<div class="abs" style="left:692px;top:5px;width:1px;height:8px;background:#b0b0b0"></div>
<span class="abs" style="left:700px;top:5px;font-size:8.6px;white-space:nowrap">Pole hodnot</span>
<div class="abs" style="left:752px;top:2.5px;width:130px;height:13px;border:1px solid #c4cad4;background:#f3f3f3;box-sizing:border-box"></div>
</div>
<!-- left toolbars -->
<div id="lefttb" style="overflow:hidden">
<div class="abs" style="left:24px;top:2px;width:1px;height:608px;background:#dcdcdc"></div>
<div class="abs" style="left:49px;top:2px;width:1px;height:608px;background:#e4e4e4"></div>
<div class="abs grip" style="left:2px;top:3px;width:20px"></div><div class="abs grip" style="left:27px;top:3px;width:20px"></div>
<div class="abs selbtn" style="left:1.5px;top:7.5px;width:21px;height:19.5px"></div>
<div class="abs selbtn" style="left:25.6px;top:517.3px;width:21.6px;height:19.6px"></div>
<svg class="abs" style="left:2.5px;top:8.0px" width="18" height="18" viewBox="0 0 20 20"><path d="M7,4 L7,15 L9.6,12.4 L11.6,16.6 L13.2,15.8 L11.2,11.8 L14.8,11.8 Z" fill="#111"/></svg>
<svg class="abs" style="left:2.5px;top:30.0px" width="18" height="18" viewBox="0 0 20 20"><path d="M3,6.5 L11,3 L17,6 L17,14 L9.5,18 L3,14.5 Z" fill="#f4f4f4" stroke="#e01420" stroke-width="1.6"/><path d="M3,6.5 L9.5,9.5 L17,6 M9.5,9.5 L9.5,18" stroke="#e01420" stroke-width="1.3" fill="none"/><path d="M5,9 L8,10.5 L8,15 L5,13.5Z M11,10.5 L15,8.5 L15,13 L11,15Z M7,6 L11,4.6 L14,6 L10,7.6Z" fill="#555"/></svg>
<svg class="abs" style="left:2.5px;top:52.0px" width="18" height="18" viewBox="0 0 20 20"><path d="M2,12 Q1,7 6,4.5 Q9,3 10,6 Q6,8 6.5,12 Q7,16 4.5,16.5 Q2.5,16 2,12Z" fill="#f2c81c" stroke="#6a5208" stroke-width="0.8"/><path d="M7.5,7 L14,4.5 L17.5,11 L11,14.5 Z" fill="#8a7a5a" stroke="#2a2a2a" stroke-width="0.9"/><ellipse cx="10.8" cy="5.8" rx="3.6" ry="1.8" transform="rotate(-22 10.8 5.8)" fill="#c8c0a8" stroke="#2a2a2a" stroke-width="0.8"/><path d="M12,9 L16,7.5 L16.8,9.5 L12.8,11Z" fill="#e8e4d8"/><path d="M4,13 Q8,17 13,15" stroke="#f2c81c" stroke-width="2" fill="none"/></svg>
<svg class="abs" style="left:2.5px;top:74.0px" width="18" height="18" viewBox="0 0 20 20"><path d="M2.5,11.5 L12,4 L17.5,6.5 L8,14.5 Z" fill="#f7a8c0" stroke="#b8567a" stroke-width="0.8"/><path d="M2.5,11.5 L8,14.5 L8,18 L2.5,15 Z" fill="#e87aa0" stroke="#b8567a" stroke-width="0.8"/><path d="M8,14.5 L17.5,6.5 L17.5,10 L8,18 Z" fill="#f08cb0" stroke="#b8567a" stroke-width="0.8"/></svg>
<div class="abs grip" style="left:2px;top:96.5px;width:20px"></div>
<svg class="abs" style="left:2.5px;top:103.0px" width="18" height="18" viewBox="0 0 20 20"><ellipse cx="10" cy="11" rx="8" ry="4.6" fill="none" stroke="#e01420" stroke-width="3"/><path d="M10,6.4 A8,4.6 0 0 1 18,11 A8,4.6 0 0 1 12,15.4" fill="none" stroke="#2e9a4a" stroke-width="3"/><path d="M2,11 A8,4.6 0 0 0 9,15.6" fill="none" stroke="#901018" stroke-width="3"/><path d="M10,1.5 L10,18.5" stroke="#111" stroke-width="1.6"/><path d="M8,4 L10,1 L12,4Z" fill="#111"/></svg>
<svg class="abs" style="left:2.5px;top:125.0px" width="18" height="18" viewBox="0 0 20 20"><path d="M5,17 Q3,13 2.5,10.5 Q3.5,9.5 5,11.5 L5.5,5.5 Q6.6,4.3 7.4,5.6 L7.8,9 L8.3,3.6 Q9.4,2.6 10.2,3.8 L10.4,9 L11.3,4.3 Q12.5,3.6 13.1,4.8 L12.9,9.6 L14.3,6.3 Q15.4,6 15.8,7.2 L14.6,13 Q14.3,15.5 13,17.5 Z" fill="#fff" stroke="#333" stroke-width="0.9"/></svg>
<svg class="abs" style="left:2.5px;top:147.0px" width="18" height="18" viewBox="0 0 20 20"><path d="M3,17.5 L9,11" stroke="#111" stroke-width="2.6" stroke-linecap="round"/><circle cx="12" cy="7.6" r="5" fill="#9cc4ea" stroke="#1a1a1a" stroke-width="1.4"/><path d="M9.5,6 Q11,4 13.5,4.6" stroke="#fff" stroke-width="1" fill="none"/></svg>
<svg class="abs" style="left:2.5px;top:169.0px" width="18" height="18" viewBox="0 0 20 20"><rect x="2" y="3" width="13" height="13" fill="none" stroke="#e01420" stroke-width="1.5" stroke-dasharray="2.2 1.4"/><path d="M3,18 L9,11.5" stroke="#111" stroke-width="2.6" stroke-linecap="round"/><circle cx="12.2" cy="8" r="5" fill="#9cc4ea" stroke="#1a1a1a" stroke-width="1.4"/></svg>
<svg class="abs" style="left:2.5px;top:191.0px" width="18" height="18" viewBox="0 0 20 20"><path d="M3.5,17.5 L8.5,12" stroke="#111" stroke-width="2.4" stroke-linecap="round"/><circle cx="10.6" cy="9.6" r="4" fill="#9cc4ea" stroke="#1a1a1a" stroke-width="1.2"/><g fill="#e01420"><path d="M1,1.5 L6,2.5 L2.2,6.4Z"/><path d="M19,1.5 L14,2.5 L17.8,6.4Z"/><path d="M19,18.5 L14,17.6 L17.8,13.6Z"/><path d="M13,13 L16,16" stroke="#e01420" stroke-width="1.6"/><path d="M4,4 L6.6,6.4 M16,4 L13.6,6.4" stroke="#e01420" stroke-width="1.6"/></g></svg>
<svg class="abs" style="left:2.5px;top:213.0px" width="18" height="18" viewBox="0 0 20 20"><path d="M8,12.5 L16.5,18" stroke="#111" stroke-width="2.6" stroke-linecap="round"/><circle cx="7.6" cy="7.2" r="5" fill="#9cc4ea" stroke="#1a1a1a" stroke-width="1.3"/><path d="M4,9 Q8,3.6 15.5,7.8 L16.5,5.6 L18.5,12 L12,12.6 L13.6,10.4 Q9,7.6 6,11 Z" fill="#1a78d0" stroke="#0a3c78" stroke-width="0.6"/></svg>
<svg class="abs" style="left:2.5px;top:235.0px" width="18" height="18" viewBox="0 0 20 20"><circle cx="10" cy="4" r="1.5" fill="#fff" stroke="#222" stroke-width="0.8"/><path d="M10,5.8 Q7.8,9 8.6,13.5 L11.4,13.5 Q12.2,9 10,5.8Z" fill="#fff" stroke="#222" stroke-width="0.8"/><path d="M8.8,13.5 L8,17.5 M11.2,13.5 L12,17.5" stroke="#222" stroke-width="0.9"/><path d="M6,18 L9,15.5 M14,18 L11,15.5" stroke="#e01420" stroke-width="1.1"/></svg>
<svg class="abs" style="left:2.5px;top:258.0px" width="18" height="18" viewBox="0 0 20 20"><path d="M1.5,10.5 Q10,2.5 18.5,10.5 Q10,16.5 1.5,10.5Z" fill="#f4f4f4" stroke="#222" stroke-width="1"/><circle cx="10" cy="10" r="3.3" fill="#555" stroke="#111" stroke-width="0.8"/><circle cx="10" cy="10" r="1.4" fill="#000"/><path d="M2,7.5 Q10,0.5 18,7" stroke="#222" stroke-width="1.6" fill="none"/><path d="M4,14 Q10,18 16,14.5" stroke="#888" stroke-width="0.8" fill="none"/></svg>
<svg class="abs" style="left:2.5px;top:280.0px" width="18" height="18" viewBox="0 0 20 20"><ellipse cx="6.6" cy="9" rx="2.7" ry="4.3" transform="rotate(-12 6.6 9)" fill="#111"/><ellipse cx="5.6" cy="15.6" rx="2" ry="1.8" fill="#111"/><ellipse cx="14" cy="6.4" rx="2.7" ry="4.3" transform="rotate(14 14 6.4)" fill="#111"/><ellipse cx="12.4" cy="13" rx="2" ry="1.8" fill="#111"/></svg>
<div class="abs grip" style="left:2px;top:305.5px;width:20px"></div>
<svg class="abs" style="left:2.5px;top:310.0px" width="18" height="18" viewBox="0 0 20 20"><path d="M2.5,5.5 Q3.5,4 5,5 L9.5,9 L10.5,7.6 Q11.8,7 12.6,8.2 L13.4,8 Q14.8,7.8 15.2,9 Q16.8,9 17.2,10.4 L17.6,14 Q17.4,17 15,18.5 L9,18 Q6,15 6.2,12.6 Q7,11.6 8.2,12.6 L3,7.4 Q2,6.4 2.5,5.5Z" fill="#fff" stroke="#222" stroke-width="0.95"/></svg>
<svg class="abs" style="left:2.5px;top:333.0px" width="18" height="18" viewBox="0 0 20 20"><rect x="8" y="3" width="10.5" height="13" fill="#fff" stroke="#222" stroke-width="0.8"/><rect x="8" y="3" width="10.5" height="2.6" fill="#e01420"/><path d="M10,8 H17 M10,10.5 H17 M10,13 H17" stroke="#555" stroke-width="0.8"/><path d="M1.5,8 L7,5.6 L11.5,8 L11.5,14 L6,17 L1.5,14 Z" fill="#f4f4f4" stroke="#e01420" stroke-width="1.4"/><path d="M1.5,8 L6,10.4 L11.5,8 M6,10.4 L6,17" stroke="#e01420" stroke-width="1.1" fill="none"/><path d="M3,10.4 L5,11.4 L5,14.6 L3,13.4Z M7.4,11.4 L10,10 L10,13.4 L7.4,14.8Z" fill="#555"/></svg>
<svg class="abs" style="left:2.5px;top:355.0px" width="18" height="18" viewBox="0 0 20 20"><path d="M2.5,6.5 L10.5,3 L17,6 L17,14 L9.5,18 L2.5,14.5 Z" fill="#f4f4f4" stroke="#e01420" stroke-width="1.6"/><path d="M2.5,6.5 L9.5,9.5 L17,6 M9.5,9.5 L9.5,18" stroke="#e01420" stroke-width="1.3" fill="none"/><path d="M4.5,9 L8,10.5 L8,15 L4.5,13.5Z M7,6 L11,4.6 L14,6 L10,7.6Z" fill="#555"/><rect x="10.5" y="11" width="6" height="6.4" fill="#1c8a3a" stroke="#0a4a1c" stroke-width="0.6"/><path d="M12,12.5 h3 M12,14.2 h3 M12,15.8 h3" stroke="#cfe8cf" stroke-width="0.7"/></svg>
<div class="abs grip" style="left:2px;top:378.0px;width:20px"></div>
<svg class="abs" style="left:2.5px;top:384.0px" width="18" height="18" viewBox="0 0 20 20"><path d="M2.5,8 L11,3.5 L17.5,8.5 L16,16.5 L6,17.5 Z" fill="#a9a58e" stroke="#333" stroke-width="0.9"/><path d="M5,9 Q10,5.5 15,9.5 M5,11.5 Q10,8.2 15.4,12 M5.6,14 Q10,11 15.5,14.4" stroke="#e01420" stroke-width="0.9" fill="none"/></svg>
<svg class="abs" style="left:2.5px;top:407.0px" width="18" height="18" viewBox="0 0 20 20"><path d="M2.5,6.5 L13.5,3.5 L17.5,11.5 L5.5,16.5 Z" fill="#a9a58e" stroke="#e01420" stroke-width="1.4"/><path d="M6,5.6 L9.4,14.8 M9.8,4.6 L13.4,13.2 M3.6,9.8 L15,6.4 M4.6,13.2 L16.4,9.2" stroke="#444" stroke-width="0.7"/><g fill="#e01420"><circle cx="2.5" cy="6.5" r="1.2"/><circle cx="13.5" cy="3.5" r="1.2"/><circle cx="17.5" cy="11.5" r="1.2"/><circle cx="5.5" cy="16.5" r="1.2"/></g></svg>
<div class="abs" style="left:3px;top:428.5px;width:18px;height:1px;background:#c8c8c8"></div>
<svg class="abs" style="left:2.5px;top:433.0px" width="18" height="18" viewBox="0 0 20 20"><path d="M2,11 L10,6 L18,10.5 L10.5,17 Z" fill="#a9a58e" stroke="#333" stroke-width="0.9"/><path d="M5,11 Q10,3 15,11" fill="#8d8973" stroke="#444" stroke-width="0.7"/><path d="M10,2 L10,11" stroke="#e01420" stroke-width="1.6"/><path d="M7.6,5 L10,1.5 L12.4,5Z M7.8,9 L10,12.4 L12.2,9Z" fill="#e01420"/></svg>
<svg class="abs" style="left:2.5px;top:455.0px" width="18" height="18" viewBox="0 0 20 20"><path d="M2,12 L10,7 L18,11.5 L10.5,17.5 Z" fill="#a9a58e" stroke="#333" stroke-width="0.9"/><path d="M6,10 L10,4.6 L14,10 L10,12.4Z" fill="#8d8973" stroke="#222" stroke-width="0.8"/><ellipse cx="10" cy="5.4" rx="2.6" ry="2" fill="#eee" stroke="#222" stroke-width="0.8"/></svg>
<svg class="abs" style="left:2.5px;top:477.0px" width="18" height="18" viewBox="0 0 20 20"><ellipse cx="10" cy="4.6" rx="4.6" ry="2.4" fill="none" stroke="#222" stroke-width="0.9"/><path d="M3,9 L10,7 L17.5,10.5 L16,17 L6,17.5 Z" fill="#a9a58e" stroke="#333" stroke-width="0.9"/><path d="M6,11 Q9,8 13.4,10 Q14.6,13 11.4,15.4 Q7,16 6,11Z" fill="none" stroke="#e01420" stroke-width="1"/></svg>
<svg class="abs" style="left:2.5px;top:500.0px" width="18" height="18" viewBox="0 0 20 20"><path d="M2.5,7 L13,4.5 L17.5,13 L6,16.5 Z" fill="#a9a58e" stroke="#222" stroke-width="1"/><path d="M2.5,7 L17.5,13 M13,4.5 L6,16.5" stroke="#555" stroke-width="0.6"/><circle cx="10" cy="10.2" r="1.5" fill="#e01420"/></svg>
<svg class="abs" style="left:2.5px;top:522.0px" width="18" height="18" viewBox="0 0 20 20"><path d="M2,15.5 L10,3 L18,6 L12,17.5 Z" fill="#a9a58e" stroke="#222" stroke-width="0.9"/><path d="M10,3 L12,17.5" stroke="#555" stroke-width="0.6"/><path d="M2,15.5 L18,6" stroke="#e01420" stroke-width="1.5"/><circle cx="2.4" cy="15.3" r="1.3" fill="#e01420"/><circle cx="17.6" cy="6.2" r="1.3" fill="#e01420"/></svg>
<div class="abs grip" style="left:2px;top:547.0px;width:20px"></div>
<svg class="abs" style="left:2.5px;top:552.0px" width="18" height="18" viewBox="0 0 20 20"><path d="M1.2,7.4 Q1.2,5.2 3.4,4.2 L8.8,1.8 Q10.4,1.2 12,1.8 L17,4.2 Q19,5.2 19,7.4 L19,13.2 Q19,15.2 17.2,16 L11.8,18.6 Q10.2,19.2 8.6,18.6 L3,16 Q1.2,15.2 1.2,13.2 Z" fill="#f0b414" stroke="#33290f" stroke-width="0.9"/><path d="M4.2,6.6 Q10,1.6 16.4,6.2 Q14.4,10.4 10.2,10.8 Q6.2,10.4 4.2,6.6Z" fill="#eccaa2" stroke="#4a3a1c" stroke-width="0.6"/><path d="M2.8,9.8 Q5.4,12.6 7.8,13 L7.8,17 Q4.6,16 2.8,14 Z" fill="#a8895c" stroke="#4a3a1c" stroke-width="0.5"/><path d="M12.6,13 Q15.4,12.4 17.6,9.8 L17.6,14 Q15.6,16.2 12.6,17 Z" fill="#a8895c" stroke="#4a3a1c" stroke-width="0.5"/><path d="M7.8,13 Q10.2,13.8 12.6,13" fill="none" stroke="#f8dc70" stroke-width="0.8"/></svg>
<svg class="abs" style="left:2.5px;top:574.0px" width="18" height="18" viewBox="0 0 20 20"><path d="M1.2,7.4 Q1.2,5.2 3.4,4.2 L8.8,1.8 Q10.4,1.2 12,1.8 L17,4.2 Q19,5.2 19,7.4 L19,13.2 Q19,15.2 17.2,16 L11.8,18.6 Q10.2,19.2 8.6,18.6 L3,16 Q1.2,15.2 1.2,13.2 Z" fill="#b4c0f0" stroke="#33290f" stroke-width="0.9"/><path d="M4.2,6.6 Q10,1.6 16.4,6.2 Q14.4,10.4 10.2,10.8 Q6.2,10.4 4.2,6.6Z" fill="#eccaa2" stroke="#4a3a1c" stroke-width="0.6"/><path d="M2.8,9.8 Q5.4,12.6 7.8,13 L7.8,17 Q4.6,16 2.8,14 Z" fill="#a8895c" stroke="#4a3a1c" stroke-width="0.5"/><path d="M12.6,13 Q15.4,12.4 17.6,9.8 L17.6,14 Q15.6,16.2 12.6,17 Z" fill="#a8895c" stroke="#4a3a1c" stroke-width="0.5"/><path d="M7.8,13 Q10.2,13.8 12.6,13" fill="none" stroke="#e0e6fa" stroke-width="0.8"/></svg>
<svg class="abs" style="left:2.5px;top:595.0px" width="18" height="18" viewBox="0 0 20 20"><path d="M1.2,7.4 Q1.2,5.2 3.4,4.2 L8.8,1.8 Q10.4,1.2 12,1.8 L17,4.2 Q19,5.2 19,7.4 L19,13.2 Q19,15.2 17.2,16 L11.8,18.6 Q10.2,19.2 8.6,18.6 L3,16 Q1.2,15.2 1.2,13.2 Z" fill="#b8d09c" stroke="#33290f" stroke-width="0.9"/><path d="M4.2,6.6 Q10,1.6 16.4,6.2 Q14.4,10.4 10.2,10.8 Q6.2,10.4 4.2,6.6Z" fill="#eccaa2" stroke="#4a3a1c" stroke-width="0.6"/><path d="M2.8,9.8 Q5.4,12.6 7.8,13 L7.8,17 Q4.6,16 2.8,14 Z" fill="#a8895c" stroke="#4a3a1c" stroke-width="0.5"/><path d="M12.6,13 Q15.4,12.4 17.6,9.8 L17.6,14 Q15.6,16.2 12.6,17 Z" fill="#a8895c" stroke="#4a3a1c" stroke-width="0.5"/><path d="M7.8,13 Q10.2,13.8 12.6,13" fill="none" stroke="#dceac8" stroke-width="0.8"/></svg>
<svg class="abs" style="left:27.5px;top:8.0px" width="18" height="18" viewBox="0 0 20 20"><rect x="4" y="3.5" width="12" height="13.5" fill="#a9a58e" stroke="#444" stroke-width="0.8"/><path d="M4,17 L16,3.5" stroke="#e01420" stroke-width="1.2"/><circle cx="4" cy="17" r="1.2" fill="#e01420"/><circle cx="16" cy="3.5" r="1.2" fill="#e01420"/></svg>
<svg class="abs" style="left:27.5px;top:30.0px" width="18" height="18" viewBox="0 0 20 20"><path d="M5,14.6 L15.2,3.4 L17.4,5.2 L7,16.2 Z" fill="#e01420" stroke="#7a0a10" stroke-width="0.5"/><path d="M5,14.6 L7,16.2 L2.6,18.4 Z" fill="#e8d0a0" stroke="#444" stroke-width="0.5"/><path d="M2.6,18.4 L3.4,16.9 L4.2,17.6Z" fill="#111"/><path d="M15.6,3 L16.6,2 L18.6,3.8 L17.7,4.9Z" fill="#555"/></svg>
<svg class="abs" style="left:27.5px;top:52.0px" width="18" height="18" viewBox="0 0 20 20"><circle cx="10" cy="10" r="7.6" fill="#a9a58e" stroke="#333" stroke-width="0.9"/><path d="M10,10 L15.4,4.6" stroke="#e01420" stroke-width="1.2"/><circle cx="10" cy="10" r="1.2" fill="#e01420"/><circle cx="15.4" cy="4.6" r="1.2" fill="#e01420"/></svg>
<svg class="abs" style="left:27.5px;top:74.0px" width="18" height="18" viewBox="0 0 20 20"><path d="M3,16.5 Q2,11 4.4,8.4 Q7,6.4 8.6,9.6 Q10,13 10.4,15.6 Q11.6,18.6 14.4,16.4 Q17,13.6 15.4,9.6 Q13.6,5.4 15,3.6 Q16,2.4 17.5,3" fill="none" stroke="#e01420" stroke-width="1.25"/><circle cx="3" cy="16.5" r="1.3" fill="#e01420"/><circle cx="17.5" cy="3" r="1.3" fill="#e01420"/></svg>
<svg class="abs" style="left:27.5px;top:96.0px" width="18" height="18" viewBox="0 0 20 20"><circle cx="10" cy="10" r="8" fill="none" stroke="#e01420" stroke-width="1.2"/><path d="M10,2.4 L17.3,7.6 L14.6,16.2 L5.4,16.2 L2.7,7.6 Z" fill="#a9a58e" stroke="#333" stroke-width="0.9"/><path d="M10,10 L15.6,5.4" stroke="#e01420" stroke-width="1.1"/><circle cx="10" cy="10" r="1.2" fill="#e01420"/></svg>
<svg class="abs" style="left:27.5px;top:118.0px" width="18" height="18" viewBox="0 0 20 20"><path d="M5.3,17.6 A8.4,8.4 0 1 1 17.3,6" fill="none" stroke="#111" stroke-width="1.3"/><path d="M5.3,17.6 L17.3,6 M4,5 L11.2,12" fill="none" stroke="#e01420" stroke-width="1"/><circle cx="5.3" cy="17.6" r="1.3" fill="#e01420"/><circle cx="17.3" cy="6" r="1.3" fill="#e01420"/><circle cx="4" cy="5" r="1.3" fill="#e01420"/></svg>
<svg class="abs" style="left:27.5px;top:140.0px" width="18" height="18" viewBox="0 0 20 20"><path d="M3.5,16.5 L3.5,3.5 L16.5,3.5 A13,13 0 0 1 3.5,16.5Z" fill="#a9a58e" stroke="#333" stroke-width="0.9"/><path d="M3.5,16.5 L3.5,3.5 L16.5,3.5 Z" fill="none" stroke="#e01420" stroke-width="1.1"/><circle cx="3.5" cy="16.5" r="1.3" fill="#e01420"/><circle cx="3.5" cy="3.5" r="1.3" fill="#e01420"/><circle cx="16.5" cy="3.5" r="1.3" fill="#e01420"/></svg>
<svg class="abs" style="left:27.5px;top:162.0px" width="18" height="18" viewBox="0 0 20 20"><path d="M3.5,16.5 A13,13 0 0 0 16.5,3.5" fill="none" stroke="#111" stroke-width="1.2"/><path d="M3.5,3.5 L16.5,3.5 L3.5,16.5" fill="none" stroke="#e01420" stroke-width="1.1"/><circle cx="3.5" cy="16.5" r="1.3" fill="#e01420"/><circle cx="3.5" cy="3.5" r="1.3" fill="#e01420"/><circle cx="16.5" cy="3.5" r="1.3" fill="#e01420"/></svg>
<div class="abs grip" style="left:27px;top:187.0px;width:20px"></div>
<svg class="abs" style="left:27.5px;top:192.0px" width="18" height="18" viewBox="0 0 20 20"><g fill="#e01420" stroke="#8a0a12" stroke-width="0.4"><path d="M10,1 L13.4,5.2 L11.3,5.2 L11.3,8.7 L14.8,8.7 L14.8,6.6 L19,10 L14.8,13.4 L14.8,11.3 L11.3,11.3 L11.3,14.8 L13.4,14.8 L10,19 L6.6,14.8 L8.7,14.8 L8.7,11.3 L5.2,11.3 L5.2,13.4 L1,10 L5.2,6.6 L5.2,8.7 L8.7,8.7 L8.7,5.2 L6.6,5.2Z"/></g><circle cx="10" cy="10" r="1.3" fill="#fff"/></svg>
<svg class="abs" style="left:27.5px;top:214.0px" width="18" height="18" viewBox="0 0 20 20"><path d="M1.5,12.5 L10,9 L18.5,12.5 L10,16.5 Z" fill="#a9a58e" stroke="#333" stroke-width="0.9"/><path d="M1.5,12.5 L10,16.5 L10,18.5 L1.5,14.5Z" fill="#8d8973" stroke="#333" stroke-width="0.7"/><path d="M10,16.5 L18.5,12.5 L18.5,14.5 L10,18.5Z" fill="#6f6c5a" stroke="#333" stroke-width="0.7"/><path d="M10,1.5 L14,6.5 L11.6,6.5 L11.6,12.5 L8.4,12.5 L8.4,6.5 L6,6.5 Z" fill="#e01420" stroke="#8a0a12" stroke-width="0.5"/></svg>
<svg class="abs" style="left:27.5px;top:236.0px" width="18" height="18" viewBox="0 0 20 20"><path d="M3.2,9 A7,7 0 0 1 15,5.2 L16.6,3.4 L17.4,9.4 L11.4,9 L13.2,7.2 A4.4,4.4 0 0 0 6,9.4Z" fill="#e01420" stroke="#8a0a12" stroke-width="0.4"/><path d="M16.8,11 A7,7 0 0 1 5,14.8 L3.4,16.6 L2.6,10.6 L8.6,11 L6.8,12.8 A4.4,4.4 0 0 0 14,10.6Z" fill="#e01420" stroke="#8a0a12" stroke-width="0.4"/></svg>
<svg class="abs" style="left:27.5px;top:258.0px" width="18" height="18" viewBox="0 0 20 20"><path d="M2,14 Q3,4 12,3 Q17,3 18,8 L14.6,9 Q13.6,6.4 11,6.6 Q6.6,7.4 6,15 Z" fill="#a9a58e" stroke="#333" stroke-width="0.9"/><path d="M2,14 L6,15 L6.4,18 L2.4,17Z" fill="#8d8973" stroke="#333" stroke-width="0.7"/><path d="M7.6,13.6 Q8,9 12,8.4 L12,6.6 L16.4,10 L12,13.2 L12,11.4 Q10.4,11.6 10.2,14.4Z" fill="#f06418" stroke="#8a2a08" stroke-width="0.5"/></svg>
<svg class="abs" style="left:27.5px;top:280.0px" width="18" height="18" viewBox="0 0 20 20"><rect x="3" y="3.5" width="14" height="14" fill="none" stroke="#e01420" stroke-width="1.3"/><rect x="3.6" y="8.5" width="8.4" height="8.4" fill="#a9a58e" stroke="#333" stroke-width="0.8"/><path d="M9,11.5 L13.6,6.9 L12,5.3 L17.4,3.4 L15.6,8.8 L14.2,7.4 L9.8,12Z" fill="#e01420" stroke="#8a0a12" stroke-width="0.4"/></svg>
<svg class="abs" style="left:27.5px;top:302.0px" width="18" height="18" viewBox="0 0 20 20"><path d="M4,4 Q16,4 16.5,17" fill="none" stroke="#e01420" stroke-width="1.3"/><path d="M3,9.5 Q10.5,9.8 11.4,17.5" fill="none" stroke="#111" stroke-width="1.2"/><path d="M5,16 L10,10.6 L8.4,9.2 L14,7 L12.4,12.6 L11,11.4 L6,16.8Z" fill="#e01420" stroke="#8a0a12" stroke-width="0.4"/></svg>
<div class="abs grip" style="left:27px;top:327.0px;width:20px"></div>
<svg class="abs" style="left:27.5px;top:333.0px" width="18" height="18" viewBox="0 0 20 20"><path d="M2,15.5 L10,10.8 L10.8,12.4 L3,17.2Z" fill="#f0c818" stroke="#5a4808" stroke-width="0.7"/><path d="M2,15.5 L3,17.2 L2.4,18.6 L1.2,16.6Z" fill="#333"/><rect x="8" y="3" width="10" height="10.4" rx="3.4" fill="#f2c81a" stroke="#4a3c08" stroke-width="1"/><ellipse cx="13.4" cy="7.8" rx="2.9" ry="3.1" fill="#f8e068" stroke="#8a6c10" stroke-width="0.8"/><rect x="8.2" y="11" width="9.6" height="2.4" rx="1" fill="#6a5a2a"/></svg>
<svg class="abs" style="left:27.5px;top:355.0px" width="18" height="18" viewBox="0 0 20 20"><path d="M3,13.5 L15,3.5" stroke="#111" stroke-width="0.9"/><path d="M1.6,11.6 L5.4,16.4 M13,1.8 L17,6.2" stroke="#111" stroke-width="1"/><path d="M4.6,14.6 L7.2,17.8 M16,5.2 L18.4,8" stroke="#e01420" stroke-width="1.1"/><path d="M3,13.5 L6,12.4 L4.6,10.8Z M15,3.5 L12,4.6 L13.4,6.2Z" fill="#111"/><text x="5" y="8.2" font-size="6.4" font-family="Liberation Serif,serif" fill="#111" transform="rotate(-38 7 7)">3'</text></svg>
<svg class="abs" style="left:27.5px;top:377.0px" width="18" height="18" viewBox="0 0 20 20"><path d="M2,16.5 Q2.6,5.5 17.6,3.5 L17,13.6 Z" fill="#f0dc30" stroke="#5a5208" stroke-width="1"/><path d="M6,14.4 Q7.4,9 14.4,7.4 L14.2,12.2 Z" fill="#f0f0f0" stroke="#5a5208" stroke-width="0.8"/></svg>
<svg class="abs" style="left:27.5px;top:399.0px" width="18" height="18" viewBox="0 0 20 20"><rect x="6.5" y="2.5" width="12" height="9" fill="#fff" stroke="#222" stroke-width="0.9"/><text x="8.4" y="10" font-size="7.4" font-family="Liberation Serif,serif" font-weight="bold" fill="#111">A1</text><path d="M6.5,7 L3,7 L3,15" fill="none" stroke="#111" stroke-width="1"/><path d="M1.2,14 L3,18.4 L4.8,14Z" fill="#111"/></svg>
<svg class="abs" style="left:27.5px;top:421.0px" width="18" height="18" viewBox="0 0 20 20"><path d="M10,11 L10,2" stroke="#1a4ad0" stroke-width="1.5"/><path d="M8,4.4 L10,1 L12,4.4Z" fill="#1a4ad0"/><path d="M10,11 L10,19" stroke="#1a4ad0" stroke-width="1.2" stroke-dasharray="1.4 1.2"/><path d="M10,11 L17.5,6.5" stroke="#18a038" stroke-width="1.5"/><path d="M15.4,5.6 L19,5.6 L17.2,8.8Z" fill="#18a038"/><path d="M10,11 L3,15.4" stroke="#18a038" stroke-width="1.2"/><path d="M10,11 L17,15.4" stroke="#e01420" stroke-width="1.5"/><path d="M15,16.2 L19,16.6 L16.8,13.2Z" fill="#e01420"/><path d="M10,11 L3,6.6" stroke="#e01420" stroke-width="1.2"/><circle cx="10" cy="11" r="1.3" fill="#111"/></svg>
<svg class="abs" style="left:27.5px;top:443.0px" width="18" height="18" viewBox="0 0 20 20"><path d="M4,16 L8.4,3 L11.8,3 L15.6,15 L12.4,16 L11.6,13 L7.8,13.6 L7,16.6 Z" fill="#a9a58e" stroke="#333" stroke-width="0.9"/><path d="M15.6,15 L17.4,16.4 L13.8,17.6 L12.4,16Z M7,16.6 L8.6,18 L5.4,17.6 L4,16Z" fill="#6f6c5a" stroke="#333" stroke-width="0.6"/><path d="M8.6,10.6 L10,6 L11,10.2Z" fill="#f0f0f0" stroke="#333" stroke-width="0.5"/></svg>
<div class="abs grip" style="left:27px;top:467.0px;width:20px"></div>
<svg class="abs" style="left:27.5px;top:473.0px" width="18" height="18" viewBox="0 0 20 20"><circle cx="10" cy="10" r="5.6" fill="#fff" stroke="#111" stroke-width="1.1"/><path d="M1.5,10 L18.5,10" stroke="#111" stroke-width="1"/><path d="M10,1 L12.4,4.6 L7.6,4.6Z M10,19 L12.4,15.4 L7.6,15.4Z M19.6,10 L16,7.6 L16,12.4Z" fill="#111"/><text x="10" y="9" font-size="4.2" text-anchor="middle" fill="#111">1</text><text x="10" y="14.2" font-size="4" text-anchor="middle" fill="#111">A1</text></svg>
<svg class="abs" style="left:27.5px;top:495.0px" width="18" height="18" viewBox="0 0 20 20"><path d="M3,2 L15,5 L15,18.5 L3,15 Z" fill="#f4b0b8" stroke="#e01420" stroke-width="0.8" opacity="0.9"/><path d="M5.4,9 L10,5 L14.6,9 L14.6,15.6 L5.4,14Z" fill="#8cc4ee" stroke="#0a5aa8" stroke-width="1.2"/><path d="M14.6,9 L18,8 L18,13.6 L14.6,15.6" fill="#e8e8e8" stroke="#333" stroke-width="0.7"/><path d="M8,10.4 L11.6,11 L11.6,14 L8,13.4Z" fill="#f4f4f4"/></svg>
<svg class="abs" style="left:27.5px;top:517.0px" width="18" height="18" viewBox="0 0 20 20"><path d="M4,9 L9.6,4 L15,8.6 L15,15 L9,17.4 L4,15Z" fill="#d8ecfa" stroke="#0a5aa8" stroke-width="1.7"/><path d="M7,10.4 L11.6,10 L11.6,14.4 L7,14.6Z" fill="#fff" stroke="#0a5aa8" stroke-width="0.7"/><path d="M15,8.6 L18.4,7.4 L18.4,13 L15,15 M9.6,4 L13,3 L18.4,7.4" fill="#e0e0e0" stroke="#444" stroke-width="0.7"/></svg>
<div class="abs grip" style="left:27px;top:542.0px;width:20px"></div>
<svg class="abs" style="left:27.5px;top:548.0px" width="18" height="18" viewBox="0 0 20 20"><path d="M2,15.4 L8,11.4 L7,9.8 L12,9.6 L10,14.2 L9,12.8 L3,17Z" fill="#f08a18" stroke="#8a4808" stroke-width="0.5"/><path d="M7,9 L13,5.6 L12,4 L17.6,3.4 L15.4,8.6 L14.2,7.2 L8,10.6Z" fill="#f08a18" stroke="#8a4808" stroke-width="0.5"/><path d="M9,15 L14.6,12.4 L13.8,10.8 L19,11 L16.4,15.6 L15.4,14 L10,16.6Z" fill="#f08a18" stroke="#8a4808" stroke-width="0.5"/></svg>
<svg class="abs" style="left:27.5px;top:568.0px" width="18" height="18" viewBox="0 0 20 20"><path d="M3,17.5 L3,14 Q6,11.5 9.6,14 L9.6,17.5Z" fill="#f0c818" stroke="#6a5408" stroke-width="0.6"/><path d="M6.2,12.6 L6.2,7 L4.4,7 L7,3 L9.6,7 L7.8,7 L7.8,12.6Z" fill="#1a3ad0" stroke="#0a1a6a" stroke-width="0.5"/><path d="M9.6,14.6 L15,10.6 L14,9 L19,9 L17,13.8 L16,12.2 L10.6,16.2Z" fill="#f08a18" stroke="#8a4808" stroke-width="0.5"/></svg>
<div class="abs grip" style="left:27px;top:587.5px;width:20px"></div>
<svg class="abs" style="left:27.5px;top:594.0px" width="18" height="18" viewBox="0 0 20 20"><rect x="2.5" y="1.5" width="15" height="17" fill="#fff"/><path d="M5,17.5 L9,4 Q12,1.6 15.6,3.4 L11.4,17.6 Z" fill="#f6e6c0" stroke="#c07c14" stroke-width="1.5"/><path d="M7,10.6 L13.6,10.4 M10.6,3.4 L8.2,17.4 M6,14.4 L12.4,14.2 M8.2,7 L14.6,6.8" stroke="#c07c14" stroke-width="1.1"/></svg>
</div>
<style>.grip{height:1px;background:repeating-linear-gradient(90deg,#b4b4b4 0,#b4b4b4 1px,transparent 1px,transparent 2px)}.selbtn{border:1px solid #8a8a8a;border-radius:2.5px;background:linear-gradient(#dadada,#ececec);box-sizing:border-box;box-shadow:inset 0 0 0 1px #f2f2f2}</style>
<!-- top toolbar icons -->
<div class="abs" id="toptb" style="left:0;top:12px;width:896px;height:25px;overflow:hidden">
<div class="abs vgrip" style="left:2px;top:4px;height:18px"></div>
<svg class="abs" style="left:7.9px;top:4.4px" width="17.6" height="17.6" viewBox="0 0 20 20"><g transform="translate(0,0) scale(0.95)"><path d="M2,4 L10,1.5 L16,4.5 L13,16.5 L5,18 Z" fill="#e01420" stroke="#7a0a10" stroke-width="0.6"/><path d="M2,4 L9,6 L16,4.5 M9,6 L5,18" stroke="#ffb0b0" stroke-width="0.7" fill="none"/><path d="M5.5,8 L9,9 L8.4,11 L5,10Z M4.6,11.6 L8,12.6 L7.4,14.6 L4,13.6Z M10,9 L14,8 L13.4,10 L9.6,11Z" fill="#fff" opacity="0.9"/></g><circle cx="14" cy="13.6" r="4.4" fill="#f4f4f4" stroke="#111" stroke-width="1.1"/><path d="M14,10.8 L14,16.4 M11.2,13.6 L16.8,13.6" stroke="#111" stroke-width="1.3"/></svg>
<svg class="abs" style="left:29.7px;top:4.4px" width="17.6" height="17.6" viewBox="0 0 20 20"><path d="M5,4 L12,2.6 L13.6,10 L6.4,11.4Z" fill="#f4f4f4" stroke="#777" stroke-width="0.6"/><path d="M7,5.6 L11,4.8 L11.6,8.4 L7.8,9.2Z" fill="#e01420"/><path d="M2,6.6 L6,2.4 L5.6,5 L8,5.4 L5,8.6 L5.2,6.6Z" fill="#1a9a30" stroke="#0a5a18" stroke-width="0.4"/><path d="M2.4,9.4 L6,8.6 L7.4,10 L14,8.8 L15,16 L3.6,18Z" fill="#8d8973" stroke="#3a382c" stroke-width="0.8"/><path d="M3.6,18 L7,11.6 L18.4,9.8 L15,16Z" fill="#a9a58e" stroke="#3a382c" stroke-width="0.8"/></svg>
<svg class="abs" style="left:52.3px;top:4.4px" width="17.6" height="17.6" viewBox="0 0 20 20"><path d="M2.6,2.6 L15.6,3.6 L17.4,5.4 L16.6,17.6 L2,16.6Z" fill="#1a6ad0" stroke="#0a2a6a" stroke-width="0.9"/><path d="M5,3 L14,3.8 L13.6,9.6 L4.6,9Z" fill="#f4f4f4" stroke="#556" stroke-width="0.5"/><path d="M6,5 L12.6,5.5 M6,6.8 L12.6,7.3" stroke="#777" stroke-width="0.6"/><path d="M5.4,11.6 L13,12.2 L12.8,17.2 L5.2,16.7Z" fill="#c8ccd4" stroke="#223" stroke-width="0.5"/><path d="M6.6,12.6 L8.8,12.8 L8.7,16.2 L6.5,16Z" fill="#222"/></svg>
<div class="abs" style="left:72.8px;top:4px;width:1px;height:18px;background:#a2a2a2"></div>
<svg class="abs" style="left:79.6px;top:4.4px" width="17.6" height="17.6" viewBox="0 0 20 20"><path d="M9.6,1.6 L10.6,11" stroke="#333" stroke-width="1.6"/><path d="M17.4,5.4 L7,11.2" stroke="#333" stroke-width="1.6"/><circle cx="4.8" cy="12.4" r="2.2" fill="none" stroke="#c01820" stroke-width="1.5"/><circle cx="11.6" cy="15.6" r="2.2" fill="none" stroke="#c01820" stroke-width="1.5"/><path d="M6.8,11.6 L10,10 M11,13.4 L10.4,10.4" stroke="#c01820" stroke-width="1.3"/></svg>
<svg class="abs" style="left:100.9px;top:4.4px" width="17.6" height="17.6" viewBox="0 0 20 20"><g transform="translate(0.5,0.5) scale(0.62)"><path d="M2,4 L10,1.5 L16,4.5 L13,16.5 L5,18 Z" fill="#e01420" stroke="#7a0a10" stroke-width="0.6"/><path d="M2,4 L9,6 L16,4.5 M9,6 L5,18" stroke="#ffb0b0" stroke-width="0.7" fill="none"/><path d="M5.5,8 L9,9 L8.4,11 L5,10Z M4.6,11.6 L8,12.6 L7.4,14.6 L4,13.6Z M10,9 L14,8 L13.4,10 L9.6,11Z" fill="#fff" opacity="0.9"/></g><g transform="translate(6.5,6) scale(0.72)"><path d="M2,4 L10,1.5 L16,4.5 L13,16.5 L5,18 Z" fill="#e01420" stroke="#7a0a10" stroke-width="0.6"/><path d="M2,4 L9,6 L16,4.5 M9,6 L5,18" stroke="#ffb0b0" stroke-width="0.7" fill="none"/><path d="M5.5,8 L9,9 L8.4,11 L5,10Z M4.6,11.6 L8,12.6 L7.4,14.6 L4,13.6Z M10,9 L14,8 L13.4,10 L9.6,11Z" fill="#fff" opacity="0.9"/></g></svg>
<svg class="abs" style="left:124.3px;top:4.4px" width="17.6" height="17.6" viewBox="0 0 20 20"><rect x="4" y="3.6" width="11.6" height="14" rx="1" fill="#e9e9e9" stroke="#b4b4b4" stroke-width="0.9"/><rect x="7" y="2.2" width="5.6" height="3" rx="0.8" fill="#d4d4d4" stroke="#b4b4b4" stroke-width="0.7"/><path d="M6.6,9 L10,7.8 L13,9 L12.4,14.4 L8.4,15.2Z" fill="#f6f6f6" stroke="#bdbdbd" stroke-width="0.8"/></svg>
<svg class="abs" style="left:145.9px;top:4.4px" width="17.6" height="17.6" viewBox="0 0 20 20"><circle cx="10" cy="10" r="7.2" fill="#fff" stroke="#e01420" stroke-width="1.7"/><path d="M5.6,5.6 L14.4,14.4 M14.4,5.6 L5.6,14.4" stroke="#e01420" stroke-width="1.7"/></svg>
<div class="abs" style="left:167.1px;top:4px;width:1px;height:18px;background:#a2a2a2"></div>
<svg class="abs" style="left:173.4px;top:4.4px" width="17.6" height="17.6" viewBox="0 0 20 20"><path d="M8,18 Q15,17 14,12.6 Q13.4,10.6 10,11 L11,14 L5.4,12 L9,13 Z" fill="#8d9a80" stroke="#3a4a38" stroke-width="0.6"/><path d="M2,8.4 L9,2.4 L9,5.6 Q17.6,5 17.4,12.4 Q17,14.4 15.6,15.4 Q16,10.4 9,10.8 L9,14 Z" fill="#1a7ad8" stroke="#0a3a7a" stroke-width="0.7"/></svg>
<svg class="abs" style="left:194.8px;top:4.4px" width="17.6" height="17.6" viewBox="0 0 20 20"><path d="M18,8.4 L11,2.4 L11,5.6 Q2.4,5 2.6,12.4 Q3,16.6 9.4,17.6 Q4,14.6 6,12 Q7.4,10.6 11,10.8 L11,14 Z" fill="#cfcfcf" stroke="#b0b0b0" stroke-width="0.7"/></svg>
<div class="abs" style="left:216.2px;top:4px;width:1px;height:18px;background:#a2a2a2"></div>
<svg class="abs" style="left:222.4px;top:4.4px" width="17.6" height="17.6" viewBox="0 0 20 20"><path d="M6,7 L10,2 L17,4.6 L13.4,9.6Z" fill="#f6f6f6" stroke="#666" stroke-width="0.6"/><path d="M1.6,9.6 L6,6 L17.4,9.6 L13.4,13.6Z" fill="#4a4a4a" stroke="#111" stroke-width="0.7"/><path d="M1.6,9.6 L13.4,13.6 L13.4,18 L1.6,14Z" fill="#2c2c2c" stroke="#111" stroke-width="0.7"/><path d="M13.4,13.6 L17.4,9.6 L17.4,14 L13.4,18Z" fill="#1c1c1c" stroke="#111" stroke-width="0.7"/><path d="M3.6,13.4 L11.6,16 L11.6,17 L3.6,14.4Z" fill="#f0f0f0"/><path d="M8,8.6 L10,7.8 L11.6,8.6 L9.6,9.4Z" fill="#2a6ad8"/><path d="M10.6,8 L11.8,7.6 L12.8,8 L11.6,8.6Z" fill="#d82a2a"/></svg>
<div class="abs" style="left:243.3px;top:4px;width:1px;height:18px;background:#a2a2a2"></div>
<svg class="abs" style="left:249.7px;top:4.4px" width="17.6" height="17.6" viewBox="0 0 20 20"><g transform="translate(0,0) scale(0.95)"><path d="M2,4 L10,1.5 L16,4.5 L13,16.5 L5,18 Z" fill="#e01420" stroke="#7a0a10" stroke-width="0.6"/><path d="M2,4 L9,6 L16,4.5 M9,6 L5,18" stroke="#ffb0b0" stroke-width="0.7" fill="none"/><path d="M5.5,8 L9,9 L8.4,11 L5,10Z M4.6,11.6 L8,12.6 L7.4,14.6 L4,13.6Z M10,9 L14,8 L13.4,10 L9.6,11Z" fill="#fff" opacity="0.9"/></g><circle cx="14" cy="13.6" r="4.6" fill="#1a4a9a" stroke="#0a1a4a" stroke-width="1"/><circle cx="14" cy="11" r="0.95" fill="#fff"/><path d="M13,12.6 h1.8 v3.6 h-1.8z" fill="#fff"/></svg>
<div class="abs" style="left:270.8px;top:0;width:1px;height:25px;background:#e0e2e6"></div><div class="abs vgrip" style="left:273.8px;top:4px;height:18px"></div>
<svg class="abs" style="left:279.6px;top:4.4px" width="17.6" height="17.6" viewBox="0 0 20 20"><path d="M2.6,9.6 L10.2,12.7 L9.7,17.5 L3.5,14.4Z" fill="#fff" stroke="#222" stroke-width="0.8"/><path d="M10.2,12.7 L18.2,9.1 L17.3,13.6 L9.7,17.5Z" fill="#fff" stroke="#222" stroke-width="0.8"/><path d="M1.3,8.7 L4.8,4 L10.2,12.2Z" fill="#fff" stroke="#222" stroke-width="0.9"/><path d="M4.8,4 L12.4,2.9 L18.8,8.7 L10.2,12.2Z" fill="#a9a58e" stroke="#222" stroke-width="0.9"/><path d="M12.8,2 L16,2 L16,6.4 L12.8,5.1Z" fill="#fff" stroke="#222" stroke-width="0.7"/><path d="M4.8,11.3 L6.4,12 L6.4,15.4 L4.8,14.6Z" fill="#333"/></svg>
<svg class="abs" style="left:301.4px;top:4.4px" width="17.6" height="17.6" viewBox="0 0 20 20"><path d="M3.6,3.6 L10,2.4 L16.4,3.6 L16.4,16.4 L10,18 L3.6,16.4Z" fill="#a9a58e" stroke="#222" stroke-width="0.9"/><path d="M10,2.4 L10,18" stroke="#333" stroke-width="0.9"/><rect x="12.6" y="5" width="2.4" height="3" fill="#f4f4f4" stroke="#222" stroke-width="0.6"/></svg>
<svg class="abs" style="left:323.5px;top:4.4px" width="17.6" height="17.6" viewBox="0 0 20 20"><g transform="translate(1.5,2.8) scale(0.85)"><path d="M1.6,10.6 L10,2.4 L18.4,10.6" fill="none" stroke="#111" stroke-width="1.5"/><path d="M4,9.4 L10,3.8 L16,9.4 L16,17.4 L4,17.4Z" fill="#fff" stroke="#111" stroke-width="1"/><rect x="8.4" y="10.6" width="3.4" height="6.8" fill="#222"/></g></svg>
<svg class="abs" style="left:345.7px;top:4.4px" width="17.6" height="17.6" viewBox="0 0 20 20"><path d="M2,9.6 L4.6,4.4 L15.4,4.4 L18,9.6Z" fill="#a9a58e" stroke="#222" stroke-width="0.9"/><rect x="3.6" y="9.6" width="12.8" height="8" fill="#fff" stroke="#111" stroke-width="1.1"/><rect x="11.6" y="1.8" width="2.6" height="4" fill="#f4f4f4" stroke="#222" stroke-width="0.7"/></svg>
<svg class="abs" style="left:367.8px;top:4.4px" width="17.6" height="17.6" viewBox="0 0 20 20"><g transform="translate(1.5,2.8) scale(0.85)"><path d="M1.6,10.6 L10,2.4 L18.4,10.6" fill="none" stroke="#111" stroke-width="1.7"/><path d="M4,9.4 L10,3.8 L16,9.4 L16,17.4 L4,17.4Z" fill="#fff" stroke="#111" stroke-width="1"/><rect x="6.2" y="1.8" width="1.8" height="2.6" fill="#fff" stroke="#222" stroke-width="0.6"/></g></svg>
<svg class="abs" style="left:390.1px;top:4.4px" width="17.6" height="17.6" viewBox="0 0 20 20"><path d="M2,9.6 L4.6,4.4 L15.4,4.4 L18,9.6Z" fill="#a9a58e" stroke="#222" stroke-width="0.9"/><rect x="3.6" y="9.6" width="12.8" height="8" fill="#fff" stroke="#111" stroke-width="1.1"/><rect x="6.4" y="3" width="2.4" height="1.6" fill="#f4f4f4" stroke="#222" stroke-width="0.6"/></svg>
<div class="abs" style="left:411.2px;top:0;width:1px;height:25px;background:#e0e2e6"></div><div class="abs vgrip" style="left:414.2px;top:4px;height:18px"></div>
<svg class="abs" style="left:419.7px;top:4.4px" width="17.6" height="17.6" viewBox="0 0 20 20"><path d="M2.5,5.4 L11,2.2 L17.4,8.8 L9.3,12.2Z" fill="#a8c8e6" stroke="#2a3a4a" stroke-width="0.9"/><path d="M2.5,5.4 L9.3,12.2 L8.6,18.2 L4.6,12Z" fill="#86acd2" stroke="#2a3a4a" stroke-width="0.9"/><path d="M9.3,12.2 L17.4,8.8 L15.5,14.4 L8.6,18.2Z" fill="#6c94c0" stroke="#2a3a4a" stroke-width="0.9"/><path d="M11,2.2 L10.6,8.6 L4.6,12 M10.6,8.6 L15.5,14.4" stroke="#4a6a8a" stroke-width="0.6" fill="none"/></svg>
<svg class="abs" style="left:442.0px;top:4.4px" width="17.6" height="17.6" viewBox="0 0 20 20"><path d="M2.5,5.4 L11,2.2 L17.4,8.8 L9.3,12.2Z" fill="#fff" stroke="#111" stroke-width="1.1"/><path d="M2.5,5.4 L9.3,12.2 L8.6,18.2 L4.6,12Z" fill="#fff" stroke="#111" stroke-width="1.1"/><path d="M9.3,12.2 L17.4,8.8 L15.5,14.4 L8.6,18.2Z" fill="#fff" stroke="#111" stroke-width="1.1"/><path d="M11,2.2 L10.6,8.6 L4.6,12 M10.6,8.6 L15.5,14.4" stroke="#999" stroke-width="0.7" fill="none" stroke-dasharray="1.2 0.8"/></svg>
<div class="abs" style="left:462.7px;top:4px;width:1px;height:18px;background:#a2a2a2"></div>
<svg class="abs" style="left:469.1px;top:4.4px" width="17.6" height="17.6" viewBox="0 0 20 20"><path d="M2.5,5.4 L11,2.2 L17.4,8.8 L9.3,12.2Z" fill="none" stroke="#111" stroke-width="1.1"/><path d="M2.5,5.4 L9.3,12.2 L8.6,18.2 L4.6,12Z" fill="none" stroke="#111" stroke-width="1.1"/><path d="M9.3,12.2 L17.4,8.8 L15.5,14.4 L8.6,18.2Z" fill="none" stroke="#111" stroke-width="1.1"/><path d="M11,2.2 L10.6,8.6 L4.6,12 M10.6,8.6 L15.5,14.4" stroke="#111" stroke-width="0.9" fill="none"/></svg>
<svg class="abs" style="left:491.0px;top:4.4px" width="17.6" height="17.6" viewBox="0 0 20 20"><path d="M2.5,5.4 L11,2.2 L17.4,8.8 L9.3,12.2Z" fill="#fff" stroke="#111" stroke-width="0.9"/><path d="M2.5,5.4 L9.3,12.2 L8.6,18.2 L4.6,12Z" fill="#fff" stroke="#111" stroke-width="0.9"/><path d="M9.3,12.2 L17.4,8.8 L15.5,14.4 L8.6,18.2Z" fill="#fafafa" stroke="#111" stroke-width="0.9"/></svg>
<svg class="abs" style="left:513.3px;top:4.4px" width="17.6" height="17.6" viewBox="0 0 20 20"><path d="M2.5,5.4 L11,2.2 L17.4,8.8 L9.3,12.2Z" fill="#b4b09a" stroke="#222" stroke-width="0.8"/><path d="M2.5,5.4 L9.3,12.2 L8.6,18.2 L4.6,12Z" fill="#9a967f" stroke="#222" stroke-width="0.8"/><path d="M9.3,12.2 L17.4,8.8 L15.5,14.4 L8.6,18.2Z" fill="#7c7966" stroke="#222" stroke-width="0.8"/></svg>
<svg class="abs" style="left:535.4px;top:4.4px" width="17.6" height="17.6" viewBox="0 0 20 20"><path d="M2.5,5.4 L11,2.2 L17.4,8.8 L9.3,12.2Z" fill="#111" stroke="#111" stroke-width="0.6"/><path d="M2.5,5.4 L9.3,12.2 L8.6,18.2 L4.6,12Z" fill="#111" stroke="#111" stroke-width="0.6"/><path d="M9.3,12.2 L17.4,8.8 L15.5,14.4 L8.6,18.2Z" fill="#111" stroke="#111" stroke-width="0.6"/><path d="M4.8,7.4 L13,4.2 M7,9.6 L15.2,6.4" stroke="#d8d4bc" stroke-width="1.4"/><path d="M3.3,8.2 L9.1,14 L16.6,10.8 M4,10.4 L8.9,15.8 L16,12.8" stroke="#d8d4bc" stroke-width="1.1" fill="none"/></svg>
<div class="abs selbtn" style="left:555.2px;top:3px;width:22.5px;height:20.8px;background:linear-gradient(#e0e0e0,#eeeeee)"></div>
<svg class="abs" style="left:557.9px;top:4.4px" width="17.6" height="17.6" viewBox="0 0 20 20"><path d="M2.5,5.4 L11,2.2 L17.4,8.8 L9.3,12.2Z" fill="#1a8ae0" stroke="#222" stroke-width="0.8"/><path d="M2.5,5.4 L9.3,12.2 L8.6,18.2 L4.6,12Z" fill="#b4b09a" stroke="#222" stroke-width="0.8"/><path d="M9.3,12.2 L17.4,8.8 L15.5,14.4 L8.6,18.2Z" fill="#7c7966" stroke="#222" stroke-width="0.8"/><path d="M2.5,5.4 L11,2.2 L9.3,12.2Z" fill="#b4b09a"/><path d="M2.5,5.4 L9.3,12.2 L8.6,18.2 L4.6,12Z" fill="#2a8ad8" stroke="#0a3a6a" stroke-width="0.8"/></svg>
<div class="abs" style="left:579.2px;top:0;width:1px;height:25px;background:#e0e2e6"></div><div class="abs vgrip" style="left:582.2px;top:4px;height:18px"></div>
<div class="abs" style="left:705.6px;top:0;width:1px;height:25px;background:#e0e2e6"></div><div class="abs vgrip" style="left:708.6px;top:4px;height:18px"></div>
<div class="abs selbtn" style="left:682.8px;top:3px;width:22.5px;height:20.8px;background:linear-gradient(#e0e0e0,#eeeeee)"></div>
<svg class="abs" style="left:685.2px;top:4.4px" width="17.6" height="17.6" viewBox="0 0 20 20"><path d="M5,9 L13,5 L18.4,8 L10.4,12.4Z M5,11.4 L10.4,14.8 L18.4,10.4 M5,13.8 L10.4,17.2 L18.4,12.8" fill="#fff" stroke="#333" stroke-width="0.8"/><path d="M5,6.6 L13,2.6 L18.4,5.6 L10.4,10Z" fill="#fff" stroke="#333" stroke-width="0.8"/><circle cx="6.4" cy="13.4" r="4.6" fill="#1a4a9a" stroke="#0a1a4a" stroke-width="1"/><circle cx="6.4" cy="10.8" r="0.95" fill="#fff"/><path d="M5.5,12.4 h1.8 v3.6 h-1.8z" fill="#fff"/></svg>
<svg class="abs" style="left:714.2px;top:4.4px" width="17.6" height="17.6" viewBox="0 0 20 20"><path d="M5,8 L12.4,3 L18.4,7 L11,12Z" fill="#fff" stroke="#111" stroke-width="0.9"/><path d="M5,8 L11,12 L11.6,16.6 L6,12.6Z" fill="#222" stroke="#111" stroke-width="0.7"/><path d="M11,12 L18.4,7 L18,11.4 L11.6,16.6Z" fill="#444" stroke="#111" stroke-width="0.7"/><circle cx="6.4" cy="13.4" r="4.6" fill="#1a4a9a" stroke="#0a1a4a" stroke-width="1"/><circle cx="6.4" cy="10.8" r="0.95" fill="#fff"/><path d="M5.5,12.4 h1.8 v3.6 h-1.8z" fill="#fff"/></svg>
<svg class="abs" style="left:737.5px;top:4.4px" width="17.6" height="17.6" viewBox="0 0 20 20"><path d="M3,7 L11,2.4 L17,7 L9,12Z" fill="#fff" stroke="#111" stroke-width="0.9"/><path d="M3,7 L9,12 L10.6,15.6 L5,11.4Z" fill="#fff" stroke="#111" stroke-width="0.8"/><path d="M9,12 L17,7 L18.6,11 L10.6,15.6Z" fill="#333" stroke="#111" stroke-width="0.7"/><path d="M6,13 L10.6,16.4 L18.6,12 L18.6,14 L11,18.4 L7,15.4Z" fill="#111"/></svg>
<div class="abs" style="left:844.8px;top:0;width:1px;height:25px;background:#e0e2e6"></div><div class="abs vgrip" style="left:847.8px;top:4px;height:18px"></div>
<svg class="abs" style="left:853.2px;top:4.4px" width="17.6" height="17.6" viewBox="0 0 20 20"><path d="M8,2.6 L17.4,2.6 L17.4,17.4 L2.6,17.4 L2.6,9 L8,9Z" fill="#fff" stroke="#4a3418" stroke-width="3.2" stroke-linejoin="round"/><path d="M8,2.6 L17.4,2.6 L17.4,17.4 L2.6,17.4 L2.6,9 L8,9Z" fill="none" stroke="#c89a62" stroke-width="1.6" stroke-linejoin="round"/></svg>
<div class="abs" style="left:871.0px;top:0;width:1px;height:25px;background:#e0e2e6"></div><div class="abs vgrip" style="left:874.0px;top:4px;height:18px"></div>
<svg class="abs" style="left:880.2px;top:4.4px" width="17.6" height="17.6" viewBox="0 0 20 20"><path d="M1,3 L7,4.6 L13,3 L19,4.6 L19,17.6 L13,16 L7,17.6 L1,16Z" fill="#a8c890" stroke="#3a4a2a" stroke-width="0.9"/><path d="M7,4.6 L7,17.6 M13,3 L13,16" stroke="#556a44" stroke-width="0.7"/><path d="M2,5 L6,6 L6,10 L2,9Z" fill="#58a038"/><path d="M8,6 L12,5 L12,9 L8,12Z" fill="#f0d850"/><path d="M14,5 L18,6.4 L18,16 L14,15Z" fill="#e8e8d8"/><path d="M3,14 L18,8" stroke="#3a5ab8" stroke-width="1"/><path d="M14,7 L18,15" stroke="#888" stroke-width="0.7"/></svg>
<div class="abs" style="left:587.5px;top:7px;width:85px;height:12px;background:#fff"></div>
<div class="abs" style="left:602px;top:7px;width:70px;height:12px;background:#ffffc4"></div>
<svg class="abs" style="left:590.5px;top:8.5px" width="8" height="9" viewBox="0 0 8 9"><path d="M1.5,0.5 L1.5,7 L3.2,5.4 L4.4,8.2 L5.6,7.7 L4.4,5 L6.6,5Z" fill="#111"/></svg>
<span class="abs" style="left:603px;top:9px;font-size:7.8px;letter-spacing:-0.25px;color:#222">Layer0</span>
<div class="abs" style="left:672.5px;top:7px;width:8px;height:12.5px;background:#ececec;border:1px solid #8a8a8a;box-sizing:border-box"><svg width="6" height="10" viewBox="0 0 6 10"><path d="M0.8,4 L5.2,4 L3,6.6Z" fill="#111"/></svg></div>
<div class="abs" style="left:761px;top:8px;width:79px;height:5px;background:linear-gradient(90deg,#ffffff 0,#fff2a0 12%,#ffd21c 35%,#ff8a10 60%,#f41414 82%,#e01030 100%);border-top:1px solid #6a6a6a;border-left:1px solid #6a6a6a;box-sizing:border-box"></div>
<div class="abs" style="left:842.3px;top:7.5px;width:1.7px;height:6px;background:#9a9a9a"></div>
<span class="abs mo" style="left:761.6px;top:15.2px">J</span>
<span class="abs mo" style="left:769.6px;top:15.2px">F</span>
<span class="abs mo" style="left:777.5px;top:15.2px">M</span>
<span class="abs mo" style="left:785.5px;top:15.2px">A</span>
<span class="abs mo" style="left:793.4px;top:15.2px">M</span>
<span class="abs mo" style="left:801.4px;top:15.2px">J</span>
<span class="abs mo" style="left:809.3px;top:15.2px">J</span>
<span class="abs mo" style="left:817.2px;top:15.2px">A</span>
<span class="abs mo" style="left:825.2px;top:15.2px">S</span>
<span class="abs mo" style="left:833.1px;top:15.2px">O</span>
<span class="abs mo" style="left:841.1px;top:15.2px">N</span>
<div class="abs" style="left:843.6px;top:12px;width:5px;height:12px;background:#f1f3f7"></div>
</div>
<style>.vgrip{width:1px;background:repeating-linear-gradient(180deg,#b0b0b0 0,#b0b0b0 1px,transparent 1px,transparent 2px)}.mo{font-size:6.2px;font-weight:bold;color:#333;width:6px;text-align:center}</style>
</body>
</html>
